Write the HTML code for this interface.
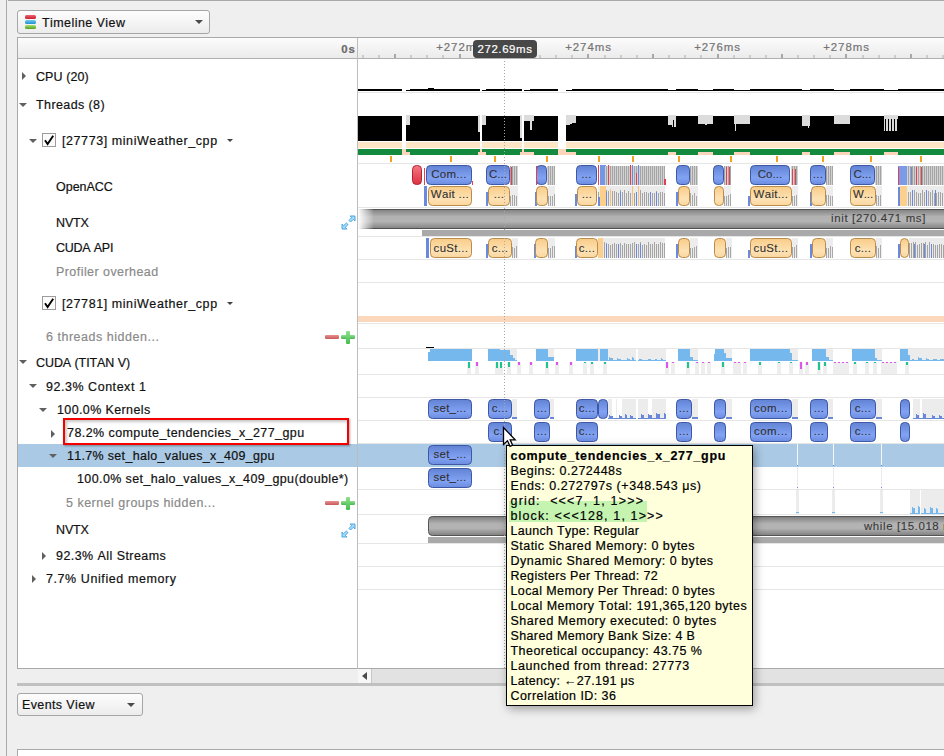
<!DOCTYPE html>
<html><head><meta charset="utf-8"><style>
html,body{margin:0;padding:0;}
body{width:944px;height:756px;overflow:hidden;position:relative;background:#efefef;font-family:"Liberation Sans", sans-serif;}
.t{position:absolute;white-space:pre;line-height:1;font-kerning:none;-webkit-text-stroke:0.2px currentColor;}
.r{position:absolute;box-sizing:border-box;}
</style></head><body>

<div class="r" style="left:6px;top:0px;width:1px;height:756px;background:#a9a9a9;"></div>
<div class="r" style="left:8px;top:0px;width:936px;height:1px;background:#a9a9a9;"></div>
<div class="r" style="left:17px;top:10px;width:193px;height:24px;background:linear-gradient(#fdfdfd,#ececec);border:1px solid #a6a6a6;border-radius:3px;"></div>
<div class="r" style="left:25px;top:15px;width:11px;height:4px;background:linear-gradient(#f06070,#c8202c);border-radius:1.5px;"></div>
<div class="r" style="left:25px;top:20px;width:11px;height:4px;background:linear-gradient(#70c8f0,#2090d0);border-radius:1.5px;"></div>
<div class="r" style="left:25px;top:25px;width:11px;height:4px;background:linear-gradient(#a8e070,#50a020);border-radius:1.5px;"></div>
<div class="t" style="left:42.00px;top:17.20px;font-size:12.48px;color:#111;font-weight:normal;letter-spacing:0.440px;">Timeline View</div>
<div class="r" style="left:194.5px;top:19.5px;width:0;height:0;border-left:4.0px solid transparent;border-right:4.0px solid transparent;border-top:4px solid #4a4a4a;"></div>
<div class="r" style="left:17px;top:37px;width:927px;height:632px;background:#ffffff;border:1px solid #a9a9a9;border-right:none;"></div>
<div class="r" style="left:18px;top:38px;width:926px;height:20px;background:linear-gradient(#fcfcfc,#ebebeb);"></div>
<div class="r" style="left:18px;top:58px;width:926px;height:1px;background:#b0b0b0;"></div>
<div class="r" style="left:357px;top:38px;width:1px;height:631px;background:#bdbdbd;"></div>
<div class="r" style="left:18px;top:669px;width:340px;height:14px;background:#efefef;"></div>
<div class="r" style="left:358px;top:669px;width:13px;height:14px;background:#f7f7f7;"></div>
<div class="r" style="left:362px;top:672px;width:0;height:0;border-top:4px solid transparent;border-bottom:4px solid transparent;border-right:5px solid #4a4a4a;"></div>
<div class="r" style="left:371px;top:669px;width:1px;height:14px;background:#c8c8c8;"></div>
<div class="r" style="left:372px;top:669px;width:572px;height:14px;background:#e2e2e2;"></div>
<div class="r" style="left:17px;top:683px;width:927px;height:3px;background:#c0c0c0;"></div>
<div class="r" style="left:17px;top:693px;width:126px;height:23px;background:linear-gradient(#fdfdfd,#ececec);border:1px solid #a6a6a6;border-radius:3px;"></div>
<div class="t" style="left:22.00px;top:699.20px;font-size:12.48px;color:#111;font-weight:normal;letter-spacing:0.392px;">Events View</div>
<div class="r" style="left:127.0px;top:703px;width:0;height:0;border-left:4.0px solid transparent;border-right:4.0px solid transparent;border-top:4px solid #4a4a4a;"></div>
<div class="r" style="left:17px;top:749px;width:927px;height:7px;background:#ffffff;border-top:1px solid #a9a9a9;border-left:1px solid #a9a9a9;"></div>
<div class="t" style="left:341.30px;top:44.02px;font-size:11.44px;color:#6a6a6a;font-weight:bold;letter-spacing:0.734px;">0s</div>
<div class="t" style="left:36.00px;top:71.20px;font-size:12.48px;color:#111;font-weight:normal;letter-spacing:0.111px;">CPU (20)</div>
<div class="r" style="left:21.5px;top:72.0px;width:0;height:0;border-top:4.0px solid transparent;border-bottom:4.0px solid transparent;border-left:4px solid #606060;"></div>
<div class="t" style="left:36.00px;top:99.20px;font-size:12.48px;color:#111;font-weight:normal;letter-spacing:0.416px;">Threads (8)</div>
<div class="r" style="left:19.0px;top:103px;width:0;height:0;border-left:4.0px solid transparent;border-right:4.0px solid transparent;border-top:4px solid #606060;"></div>
<div class="r" style="left:29.0px;top:139px;width:0;height:0;border-left:4.0px solid transparent;border-right:4.0px solid transparent;border-top:4px solid #606060;"></div>
<div class="r" style="left:42px;top:133px;width:14px;height:14px;background:#fbfbfb;border:1px solid #9c9c9c;"></div>
<svg class="r" style="left:42px;top:133px" width="14" height="14"><path d="M3 7.2 L5.6 11 L11.2 2.8" fill="none" stroke="#000" stroke-width="1.9"/></svg>
<div class="t" style="left:62.00px;top:135.20px;font-size:12.48px;color:#111;font-weight:normal;letter-spacing:0.590px;">[27773] miniWeather_cpp</div>
<div class="r" style="left:226.5px;top:139px;width:0;height:0;border-left:3.0px solid transparent;border-right:3.0px solid transparent;border-top:3px solid #404040;"></div>
<div class="t" style="left:56.00px;top:181.20px;font-size:12.48px;color:#111;font-weight:normal;letter-spacing:-0.002px;">OpenACC</div>
<div class="t" style="left:56.00px;top:217.20px;font-size:12.48px;color:#111;font-weight:normal;letter-spacing:-0.129px;">NVTX</div>
<svg class="r" style="left:341px;top:215px" width="15" height="15" viewBox="0 0 15 15">
<g fill="#a6dcfa" stroke="#4aa6e4" stroke-width="1">
<path d="M9 1 L14 1 L14 6 L12.3 4.3 L9.6 7 L8 5.4 L10.7 2.7 Z"/>
<path d="M1 14 L1 9 L2.7 10.7 L5.4 8 L7 9.6 L4.3 12.3 L6 14 Z"/>
</g></svg>
<div class="t" style="left:56.00px;top:242.20px;font-size:12.48px;color:#111;font-weight:normal;letter-spacing:-0.213px;">CUDA API</div>
<div class="t" style="left:56.00px;top:266.20px;font-size:12.48px;color:#8a8a8a;font-weight:normal;letter-spacing:0.449px;">Profiler overhead</div>
<div class="r" style="left:42px;top:296px;width:14px;height:14px;background:#fbfbfb;border:1px solid #9c9c9c;"></div>
<svg class="r" style="left:42px;top:296px" width="14" height="14"><path d="M3 7.2 L5.6 11 L11.2 2.8" fill="none" stroke="#000" stroke-width="1.9"/></svg>
<div class="t" style="left:62.00px;top:297.70px;font-size:12.48px;color:#111;font-weight:normal;letter-spacing:0.590px;">[27781] miniWeather_cpp</div>
<div class="r" style="left:226.5px;top:302px;width:0;height:0;border-left:3.0px solid transparent;border-right:3.0px solid transparent;border-top:3px solid #404040;"></div>
<div class="t" style="left:46.00px;top:330.70px;font-size:12.48px;color:#8a8a8a;font-weight:normal;letter-spacing:0.535px;">6 threads hidden...</div>
<div class="r" style="left:325px;top:335px;width:14px;height:4px;background:linear-gradient(#e89090,#c85858);border-radius:1px;"></div>
<div class="r" style="left:341px;top:335px;width:14px;height:4px;background:linear-gradient(#90e090,#48b850);border-radius:1px;"></div>
<div class="r" style="left:346px;top:330.5px;width:4px;height:13.5px;background:linear-gradient(#90e090,#40c048);border-radius:1px;"></div>
<div class="t" style="left:36.00px;top:356.70px;font-size:12.48px;color:#111;font-weight:normal;letter-spacing:-0.060px;">CUDA (TITAN V)</div>
<div class="r" style="left:19.0px;top:360px;width:0;height:0;border-left:4.0px solid transparent;border-right:4.0px solid transparent;border-top:4px solid #606060;"></div>
<div class="t" style="left:46.00px;top:381.20px;font-size:12.48px;color:#111;font-weight:normal;letter-spacing:0.547px;">92.3% Context 1</div>
<div class="r" style="left:29.0px;top:384px;width:0;height:0;border-left:4.0px solid transparent;border-right:4.0px solid transparent;border-top:4px solid #606060;"></div>
<div class="t" style="left:57.00px;top:403.70px;font-size:12.48px;color:#111;font-weight:normal;letter-spacing:0.393px;">100.0% Kernels</div>
<div class="r" style="left:39.0px;top:408px;width:0;height:0;border-left:4.0px solid transparent;border-right:4.0px solid transparent;border-top:4px solid #606060;"></div>
<div class="t" style="left:67.00px;top:426.70px;font-size:12.48px;color:#111;font-weight:normal;letter-spacing:0.443px;">78.2% compute_tendencies_x_277_gpu</div>
<div class="r" style="left:51px;top:429.5px;width:0;height:0;border-top:4.0px solid transparent;border-bottom:4.0px solid transparent;border-left:4px solid #606060;"></div>
<div class="r" style="left:18px;top:444px;width:339px;height:23px;background:#aac9e4;"></div>
<div class="t" style="left:67.00px;top:450.20px;font-size:12.48px;color:#111;font-weight:normal;letter-spacing:0.329px;">11.7% set_halo_values_x_409_gpu</div>
<div class="r" style="left:49.0px;top:454px;width:0;height:0;border-left:4.0px solid transparent;border-right:4.0px solid transparent;border-top:4px solid #606060;"></div>
<div class="t" style="left:77.00px;top:473.20px;font-size:12.48px;color:#111;font-weight:normal;letter-spacing:0.404px;">100.0% set_halo_values_x_409_gpu(double*)</div>
<div class="t" style="left:66.00px;top:497.20px;font-size:12.48px;color:#8a8a8a;font-weight:normal;letter-spacing:0.500px;">5 kernel groups hidden...</div>
<div class="r" style="left:325px;top:501px;width:14px;height:4px;background:linear-gradient(#e89090,#c85858);border-radius:1px;"></div>
<div class="r" style="left:341px;top:501px;width:14px;height:4px;background:linear-gradient(#90e090,#48b850);border-radius:1px;"></div>
<div class="r" style="left:346px;top:496.5px;width:4px;height:13.5px;background:linear-gradient(#90e090,#40c048);border-radius:1px;"></div>
<div class="t" style="left:56.00px;top:524.20px;font-size:12.48px;color:#111;font-weight:normal;letter-spacing:-0.129px;">NVTX</div>
<svg class="r" style="left:341px;top:523px" width="15" height="15" viewBox="0 0 15 15">
<g fill="#a6dcfa" stroke="#4aa6e4" stroke-width="1">
<path d="M9 1 L14 1 L14 6 L12.3 4.3 L9.6 7 L8 5.4 L10.7 2.7 Z"/>
<path d="M1 14 L1 9 L2.7 10.7 L5.4 8 L7 9.6 L4.3 12.3 L6 14 Z"/>
</g></svg>
<div class="t" style="left:56.00px;top:549.70px;font-size:12.48px;color:#111;font-weight:normal;letter-spacing:0.454px;">92.3% All Streams</div>
<div class="r" style="left:42px;top:551.5px;width:0;height:0;border-top:4.0px solid transparent;border-bottom:4.0px solid transparent;border-left:4px solid #606060;"></div>
<div class="t" style="left:46.00px;top:572.70px;font-size:12.48px;color:#111;font-weight:normal;letter-spacing:0.597px;">7.7% Unified memory</div>
<div class="r" style="left:32px;top:574.5px;width:0;height:0;border-top:4.0px solid transparent;border-bottom:4.0px solid transparent;border-left:4px solid #606060;"></div>
<div class="r" style="left:63px;top:418px;width:286px;height:27px;background:transparent;border:2px solid #f40000;box-shadow:1px 1px 2px rgba(0,0,0,0.35), inset 2px 2px 3px rgba(0,0,0,0.22);"></div>
<div class="r" style="left:362px;top:55px;width:2px;height:3px;background:#cdcdcd;"></div>
<div class="r" style="left:378px;top:55px;width:2px;height:3px;background:#cdcdcd;"></div>
<div class="r" style="left:394px;top:54px;width:2px;height:4px;background:#a8a8a8;"></div>
<div class="r" style="left:410px;top:55px;width:2px;height:3px;background:#cdcdcd;"></div>
<div class="r" style="left:426px;top:55px;width:2px;height:3px;background:#cdcdcd;"></div>
<div class="r" style="left:442px;top:55px;width:2px;height:3px;background:#cdcdcd;"></div>
<div class="r" style="left:459px;top:54px;width:2px;height:4px;background:#a8a8a8;"></div>
<div class="r" style="left:475px;top:55px;width:2px;height:3px;background:#cdcdcd;"></div>
<div class="r" style="left:491px;top:55px;width:2px;height:3px;background:#cdcdcd;"></div>
<div class="r" style="left:507px;top:55px;width:2px;height:3px;background:#cdcdcd;"></div>
<div class="r" style="left:523px;top:54px;width:2px;height:4px;background:#a8a8a8;"></div>
<div class="r" style="left:539px;top:55px;width:2px;height:3px;background:#cdcdcd;"></div>
<div class="r" style="left:555px;top:55px;width:2px;height:3px;background:#cdcdcd;"></div>
<div class="r" style="left:571px;top:55px;width:2px;height:3px;background:#cdcdcd;"></div>
<div class="r" style="left:587px;top:54px;width:2px;height:4px;background:#a8a8a8;"></div>
<div class="r" style="left:604px;top:55px;width:2px;height:3px;background:#cdcdcd;"></div>
<div class="r" style="left:620px;top:55px;width:2px;height:3px;background:#cdcdcd;"></div>
<div class="r" style="left:636px;top:55px;width:2px;height:3px;background:#cdcdcd;"></div>
<div class="r" style="left:652px;top:54px;width:2px;height:4px;background:#a8a8a8;"></div>
<div class="r" style="left:668px;top:55px;width:2px;height:3px;background:#cdcdcd;"></div>
<div class="r" style="left:684px;top:55px;width:2px;height:3px;background:#cdcdcd;"></div>
<div class="r" style="left:700px;top:55px;width:2px;height:3px;background:#cdcdcd;"></div>
<div class="r" style="left:717px;top:54px;width:2px;height:4px;background:#a8a8a8;"></div>
<div class="r" style="left:733px;top:55px;width:2px;height:3px;background:#cdcdcd;"></div>
<div class="r" style="left:749px;top:55px;width:2px;height:3px;background:#cdcdcd;"></div>
<div class="r" style="left:765px;top:55px;width:2px;height:3px;background:#cdcdcd;"></div>
<div class="r" style="left:781px;top:54px;width:2px;height:4px;background:#a8a8a8;"></div>
<div class="r" style="left:797px;top:55px;width:2px;height:3px;background:#cdcdcd;"></div>
<div class="r" style="left:813px;top:55px;width:2px;height:3px;background:#cdcdcd;"></div>
<div class="r" style="left:829px;top:55px;width:2px;height:3px;background:#cdcdcd;"></div>
<div class="r" style="left:845px;top:54px;width:2px;height:4px;background:#a8a8a8;"></div>
<div class="r" style="left:862px;top:55px;width:2px;height:3px;background:#cdcdcd;"></div>
<div class="r" style="left:878px;top:55px;width:2px;height:3px;background:#cdcdcd;"></div>
<div class="r" style="left:894px;top:55px;width:2px;height:3px;background:#cdcdcd;"></div>
<div class="r" style="left:910px;top:54px;width:2px;height:4px;background:#a8a8a8;"></div>
<div class="r" style="left:926px;top:55px;width:2px;height:3px;background:#cdcdcd;"></div>
<div class="r" style="left:942px;top:55px;width:2px;height:3px;background:#cdcdcd;"></div>
<div class="t" style="left:436.16px;top:42.02px;font-size:11.44px;color:#747474;font-weight:normal;letter-spacing:0.943px;">+272ms</div>
<div class="t" style="left:565.16px;top:42.02px;font-size:11.44px;color:#747474;font-weight:normal;letter-spacing:0.943px;">+274ms</div>
<div class="t" style="left:694.16px;top:42.02px;font-size:11.44px;color:#747474;font-weight:normal;letter-spacing:0.943px;">+276ms</div>
<div class="t" style="left:823.16px;top:42.02px;font-size:11.44px;color:#747474;font-weight:normal;letter-spacing:0.943px;">+278ms</div>
<svg class="r" style="left:358px;top:59px" width="586" height="609" viewBox="358 59 586 609" shape-rendering="crispEdges">
<defs>
<linearGradient id="gb" x1="0" y1="0" x2="0" y2="1"><stop offset="0" stop-color="#6282d4"/><stop offset="0.65" stop-color="#82a2f4"/><stop offset="1" stop-color="#6c8ce0"/></linearGradient>
<linearGradient id="go" x1="0" y1="0" x2="0" y2="1"><stop offset="0" stop-color="#f9cc88"/><stop offset="0.65" stop-color="#fde2b4"/><stop offset="1" stop-color="#fad69e"/></linearGradient>
<linearGradient id="gr" x1="0" y1="0" x2="0" y2="1"><stop offset="0" stop-color="#f57a84"/><stop offset="1" stop-color="#dc3040"/></linearGradient>
<linearGradient id="gn" x1="0" y1="0" x2="0" y2="1"><stop offset="0" stop-color="#545454"/><stop offset="0.05" stop-color="#545454"/><stop offset="0.05" stop-color="#848484"/><stop offset="0.38" stop-color="#b2b2b2"/><stop offset="0.62" stop-color="#b4b4b4"/><stop offset="0.95" stop-color="#868686"/><stop offset="0.95" stop-color="#505050"/><stop offset="1" stop-color="#505050"/></linearGradient>
<linearGradient id="gfade" x1="0" y1="0" x2="1" y2="0"><stop offset="0" stop-color="#fff" stop-opacity="1"/><stop offset="1" stop-color="#fff" stop-opacity="0"/></linearGradient>
<pattern id="pst" x="0" y="0" width="2" height="4" patternUnits="userSpaceOnUse"><rect x="0" y="0" width="2" height="4" fill="#d2d2d2"/><rect x="0" y="0" width="1" height="4" fill="#a4a4a4"/></pattern>
</defs>
<rect x="358" y="59" width="586" height="609" fill="#ffffff" />
<rect x="358" y="444" width="586" height="23" fill="#aac9e4" />
<rect x="358" y="92" width="586" height="1" fill="#e6e6e6" />
<rect x="358" y="163" width="586" height="1" fill="#e6e6e6" />
<rect x="358" y="207" width="586" height="1" fill="#e6e6e6" />
<rect x="358" y="236" width="586" height="1" fill="#e6e6e6" />
<rect x="358" y="259" width="586" height="1" fill="#e6e6e6" />
<rect x="358" y="282" width="586" height="1" fill="#e6e6e6" />
<rect x="358" y="323" width="586" height="1" fill="#e6e6e6" />
<rect x="358" y="348" width="586" height="1" fill="#e6e6e6" />
<rect x="358" y="374" width="586" height="1" fill="#e6e6e6" />
<rect x="358" y="397" width="586" height="1" fill="#e6e6e6" />
<rect x="358" y="420" width="586" height="1" fill="#e6e6e6" />
<rect x="358" y="443" width="586" height="1" fill="#e6e6e6" />
<rect x="358" y="489" width="586" height="1" fill="#e6e6e6" />
<rect x="358" y="514" width="586" height="1" fill="#e6e6e6" />
<rect x="358" y="543" width="586" height="1" fill="#e6e6e6" />
<rect x="358" y="566" width="586" height="1" fill="#e6e6e6" />
<rect x="358" y="589" width="586" height="1" fill="#e6e6e6" />
<rect x="358" y="89" width="586" height="2" fill="#000" />
<rect x="402" y="88" width="4" height="4" fill="#fff" />
<rect x="480" y="88" width="2" height="4" fill="#fff" />
<rect x="522" y="88" width="2" height="4" fill="#fff" />
<rect x="558" y="88" width="8" height="4" fill="#fff" />
<rect x="668" y="89" width="8" height="1" fill="#fff" />
<rect x="698" y="89" width="15" height="1" fill="#fff" />
<rect x="734" y="89" width="16" height="1" fill="#fff" />
<rect x="802" y="89" width="8" height="1" fill="#fff" />
<rect x="834" y="89" width="16" height="1" fill="#fff" />
<rect x="884" y="89" width="14" height="1" fill="#fff" />
<rect x="406" y="89" width="4" height="1" fill="#fff" />
<rect x="428" y="88" width="6" height="1" fill="#000" />
<rect x="482" y="89" width="4" height="1" fill="#fff" />
<rect x="524" y="89" width="6" height="1" fill="#fff" />
<rect x="566" y="89" width="6" height="1" fill="#fff" />
<rect x="358" y="116" width="586" height="25" fill="#000" />
<rect x="358" y="142" width="586" height="6" fill="#fde6c6" />
<rect x="358" y="149" width="586" height="6" fill="#138a3e" />
<rect x="406" y="115" width="1" height="10" fill="#dcdcdc" />
<rect x="407" y="115" width="1" height="10" fill="#dcdcdc" />
<rect x="408" y="115" width="1" height="10" fill="#dcdcdc" />
<rect x="409" y="115" width="1" height="10" fill="#dcdcdc" />
<rect x="478" y="115" width="1" height="17" fill="#dcdcdc" />
<rect x="479" y="115" width="1" height="17" fill="#dcdcdc" />
<rect x="482" y="115" width="1" height="10" fill="#dcdcdc" />
<rect x="483" y="115" width="1" height="10" fill="#dcdcdc" />
<rect x="484" y="115" width="1" height="10" fill="#dcdcdc" />
<rect x="485" y="115" width="1" height="10" fill="#dcdcdc" />
<rect x="520" y="115" width="1" height="23" fill="#dcdcdc" />
<rect x="521" y="115" width="1" height="23" fill="#dcdcdc" />
<rect x="524" y="115" width="1" height="6" fill="#dcdcdc" />
<rect x="525" y="115" width="1" height="6" fill="#dcdcdc" />
<rect x="526" y="115" width="1" height="6" fill="#dcdcdc" />
<rect x="527" y="115" width="1" height="6" fill="#dcdcdc" />
<rect x="528" y="115" width="1" height="6" fill="#dcdcdc" />
<rect x="529" y="115" width="1" height="6" fill="#dcdcdc" />
<rect x="530" y="115" width="1" height="15" fill="#dcdcdc" />
<rect x="531" y="115" width="1" height="15" fill="#dcdcdc" />
<rect x="532" y="115" width="1" height="6" fill="#dcdcdc" />
<rect x="533" y="115" width="1" height="6" fill="#dcdcdc" />
<rect x="566" y="115" width="1" height="10" fill="#dcdcdc" />
<rect x="567" y="115" width="1" height="10" fill="#dcdcdc" />
<rect x="568" y="115" width="1" height="10" fill="#dcdcdc" />
<rect x="569" y="115" width="1" height="10" fill="#dcdcdc" />
<rect x="570" y="115" width="1" height="9" fill="#dcdcdc" />
<rect x="571" y="115" width="1" height="9" fill="#dcdcdc" />
<rect x="572" y="115" width="1" height="8" fill="#dcdcdc" />
<rect x="573" y="115" width="1" height="8" fill="#dcdcdc" />
<rect x="574" y="115" width="1" height="8" fill="#dcdcdc" />
<rect x="575" y="115" width="1" height="8" fill="#dcdcdc" />
<rect x="668" y="115" width="1" height="10" fill="#dcdcdc" />
<rect x="669" y="115" width="1" height="10" fill="#dcdcdc" />
<rect x="670" y="115" width="1" height="10" fill="#dcdcdc" />
<rect x="671" y="115" width="1" height="10" fill="#dcdcdc" />
<rect x="672" y="115" width="1" height="12" fill="#dcdcdc" />
<rect x="673" y="115" width="1" height="5" fill="#dcdcdc" />
<rect x="674" y="115" width="1" height="12" fill="#dcdcdc" />
<rect x="675" y="115" width="1" height="12" fill="#dcdcdc" />
<rect x="698" y="115" width="1" height="9" fill="#dcdcdc" />
<rect x="699" y="115" width="1" height="9" fill="#dcdcdc" />
<rect x="700" y="115" width="1" height="9" fill="#dcdcdc" />
<rect x="701" y="115" width="1" height="9" fill="#dcdcdc" />
<rect x="702" y="115" width="1" height="9" fill="#dcdcdc" />
<rect x="703" y="115" width="1" height="9" fill="#dcdcdc" />
<rect x="704" y="115" width="1" height="9" fill="#dcdcdc" />
<rect x="705" y="115" width="1" height="10" fill="#dcdcdc" />
<rect x="706" y="115" width="1" height="10" fill="#dcdcdc" />
<rect x="707" y="115" width="1" height="9" fill="#dcdcdc" />
<rect x="708" y="115" width="1" height="9" fill="#dcdcdc" />
<rect x="709" y="115" width="1" height="9" fill="#dcdcdc" />
<rect x="710" y="115" width="1" height="9" fill="#dcdcdc" />
<rect x="711" y="115" width="1" height="9" fill="#dcdcdc" />
<rect x="712" y="115" width="1" height="9" fill="#dcdcdc" />
<rect x="734" y="115" width="1" height="9" fill="#dcdcdc" />
<rect x="735" y="115" width="1" height="16" fill="#dcdcdc" />
<rect x="736" y="115" width="1" height="9" fill="#dcdcdc" />
<rect x="737" y="115" width="1" height="9" fill="#dcdcdc" />
<rect x="738" y="115" width="1" height="9" fill="#dcdcdc" />
<rect x="739" y="115" width="1" height="9" fill="#dcdcdc" />
<rect x="740" y="115" width="1" height="9" fill="#dcdcdc" />
<rect x="741" y="115" width="1" height="9" fill="#dcdcdc" />
<rect x="742" y="115" width="1" height="9" fill="#dcdcdc" />
<rect x="743" y="115" width="1" height="9" fill="#dcdcdc" />
<rect x="744" y="115" width="1" height="9" fill="#dcdcdc" />
<rect x="745" y="115" width="1" height="9" fill="#dcdcdc" />
<rect x="746" y="115" width="1" height="9" fill="#dcdcdc" />
<rect x="747" y="115" width="1" height="9" fill="#dcdcdc" />
<rect x="748" y="115" width="1" height="9" fill="#dcdcdc" />
<rect x="749" y="115" width="1" height="9" fill="#dcdcdc" />
<rect x="802" y="115" width="1" height="11" fill="#dcdcdc" />
<rect x="803" y="115" width="1" height="11" fill="#dcdcdc" />
<rect x="804" y="115" width="1" height="11" fill="#dcdcdc" />
<rect x="805" y="115" width="1" height="11" fill="#dcdcdc" />
<rect x="806" y="115" width="1" height="11" fill="#dcdcdc" />
<rect x="807" y="115" width="1" height="11" fill="#dcdcdc" />
<rect x="808" y="115" width="1" height="13" fill="#dcdcdc" />
<rect x="809" y="115" width="1" height="11" fill="#dcdcdc" />
<rect x="834" y="115" width="1" height="9" fill="#dcdcdc" />
<rect x="835" y="115" width="1" height="9" fill="#dcdcdc" />
<rect x="836" y="115" width="1" height="9" fill="#dcdcdc" />
<rect x="837" y="115" width="1" height="9" fill="#dcdcdc" />
<rect x="838" y="115" width="1" height="9" fill="#dcdcdc" />
<rect x="839" y="115" width="1" height="9" fill="#dcdcdc" />
<rect x="840" y="115" width="1" height="9" fill="#dcdcdc" />
<rect x="841" y="115" width="1" height="9" fill="#dcdcdc" />
<rect x="842" y="115" width="1" height="9" fill="#dcdcdc" />
<rect x="843" y="115" width="1" height="9" fill="#dcdcdc" />
<rect x="844" y="115" width="1" height="9" fill="#dcdcdc" />
<rect x="845" y="115" width="1" height="9" fill="#dcdcdc" />
<rect x="846" y="115" width="1" height="9" fill="#dcdcdc" />
<rect x="847" y="115" width="1" height="9" fill="#dcdcdc" />
<rect x="848" y="115" width="1" height="9" fill="#dcdcdc" />
<rect x="849" y="115" width="1" height="9" fill="#dcdcdc" />
<rect x="884" y="115" width="1" height="16" fill="#dcdcdc" />
<rect x="885" y="115" width="1" height="4" fill="#dcdcdc" />
<rect x="886" y="115" width="1" height="16" fill="#dcdcdc" />
<rect x="887" y="115" width="1" height="16" fill="#dcdcdc" />
<rect x="888" y="115" width="1" height="4" fill="#dcdcdc" />
<rect x="889" y="115" width="1" height="16" fill="#dcdcdc" />
<rect x="890" y="115" width="1" height="16" fill="#dcdcdc" />
<rect x="891" y="115" width="1" height="4" fill="#dcdcdc" />
<rect x="892" y="115" width="1" height="16" fill="#dcdcdc" />
<rect x="893" y="115" width="1" height="16" fill="#dcdcdc" />
<rect x="894" y="115" width="1" height="4" fill="#dcdcdc" />
<rect x="895" y="115" width="1" height="16" fill="#dcdcdc" />
<rect x="896" y="115" width="1" height="16" fill="#dcdcdc" />
<rect x="897" y="115" width="1" height="4" fill="#dcdcdc" />
<rect x="406" y="152" width="4" height="3" fill="#fbd6bc" />
<rect x="478" y="152" width="8" height="3" fill="#fbd6bc" />
<rect x="520" y="152" width="14" height="3" fill="#fbd6bc" />
<rect x="566" y="152" width="10" height="3" fill="#fbd6bc" />
<rect x="668" y="152" width="8" height="3" fill="#fbd6bc" />
<rect x="698" y="152" width="15" height="3" fill="#fbd6bc" />
<rect x="734" y="152" width="16" height="3" fill="#fbd6bc" />
<rect x="802" y="152" width="8" height="3" fill="#fbd6bc" />
<rect x="834" y="152" width="16" height="3" fill="#fbd6bc" />
<rect x="884" y="152" width="14" height="3" fill="#fbd6bc" />
<rect x="402" y="116" width="4" height="39" fill="#fff" />
<rect x="402" y="149" width="4" height="6" fill="#fbd6bc" />
<rect x="480" y="116" width="2" height="39" fill="#fff" />
<rect x="480" y="149" width="2" height="6" fill="#fbd6bc" />
<rect x="522" y="116" width="2" height="39" fill="#fff" />
<rect x="522" y="149" width="2" height="6" fill="#fbd6bc" />
<rect x="558" y="116" width="8" height="39" fill="#fff" />
<rect x="558" y="149" width="8" height="6" fill="#fbd6bc" />
<rect x="390" y="156" width="2" height="6" fill="#f0a21c" />
<rect x="450" y="156" width="2" height="6" fill="#f0a21c" />
<rect x="494" y="156" width="2" height="6" fill="#f0a21c" />
<rect x="546" y="156" width="2" height="6" fill="#f0a21c" />
<rect x="598" y="156" width="2" height="6" fill="#f0a21c" />
<rect x="632" y="156" width="2" height="6" fill="#f0a21c" />
<rect x="678" y="156" width="2" height="6" fill="#f0a21c" />
<rect x="730" y="156" width="2" height="6" fill="#f0a21c" />
<rect x="776" y="156" width="2" height="6" fill="#f0a21c" />
<rect x="822" y="156" width="2" height="6" fill="#f0a21c" />
<rect x="870" y="156" width="2" height="6" fill="#f0a21c" />
<rect x="920" y="156" width="2" height="6" fill="#f0a21c" />
<rect x="412.5" y="165.5" width="9" height="19" rx="4" ry="4" fill="url(#gr)" stroke="#b42232" stroke-width="1" shape-rendering="geometricPrecision"/>
<rect x="424" y="168" width="1" height="17" fill="#e04050" />
<rect x="426.5" y="165.5" width="45" height="19" rx="4" ry="4" fill="url(#gb)" stroke="#3e58a6" stroke-width="1" shape-rendering="geometricPrecision"/>
<rect x="472" y="181" width="1" height="4" fill="#e04050" />
<rect x="486.5" y="165.5" width="23" height="19" rx="4" ry="4" fill="url(#gb)" stroke="#3e58a6" stroke-width="1" shape-rendering="geometricPrecision"/>
<rect x="510" y="166" width="8" height="19" fill="url(#pst)" />
<rect x="511" y="167" width="1" height="18" fill="#e04050" />
<rect x="536.5" y="165.5" width="10" height="19" rx="4" ry="4" fill="url(#gb)" stroke="#3e58a6" stroke-width="1" shape-rendering="geometricPrecision"/>
<rect x="547" y="166" width="8" height="19" fill="url(#pst)" />
<rect x="536" y="166" width="1" height="19" fill="#e04050" />
<rect x="576.5" y="165.5" width="20" height="19" rx="4" ry="4" fill="url(#gb)" stroke="#3e58a6" stroke-width="1" shape-rendering="geometricPrecision"/>
<rect x="600" y="165" width="6" height="20" fill="#7596e4" />
<rect x="598" y="165" width="1" height="20" fill="#e04050" />
<rect x="605" y="166" width="60" height="19" fill="url(#pst)" />
<rect x="608" y="165" width="1" height="20" fill="#e04050" />
<rect x="630" y="165" width="1" height="20" fill="#e04050" />
<rect x="636" y="173" width="1" height="12" fill="#e04050" />
<rect x="664" y="179" width="2" height="6" fill="#e04050" />
<rect x="632" y="165" width="1" height="20" fill="#6a8ae0" />
<rect x="638" y="165" width="1" height="20" fill="#6a8ae0" />
<rect x="676.5" y="165.5" width="13" height="19" rx="4" ry="4" fill="url(#gb)" stroke="#3e58a6" stroke-width="1" shape-rendering="geometricPrecision"/>
<rect x="690" y="166" width="8" height="19" fill="url(#pst)" />
<rect x="713.5" y="165.5" width="10" height="19" rx="4" ry="4" fill="url(#gb)" stroke="#3e58a6" stroke-width="1" shape-rendering="geometricPrecision"/>
<rect x="724" y="166" width="7" height="19" fill="url(#pst)" />
<rect x="726" y="167" width="1" height="18" fill="#e04050" />
<rect x="729" y="167" width="1" height="18" fill="#e04050" />
<rect x="750.5" y="165.5" width="39" height="19" rx="4" ry="4" fill="url(#gb)" stroke="#3e58a6" stroke-width="1" shape-rendering="geometricPrecision"/>
<rect x="791" y="166" width="7" height="19" fill="url(#pst)" />
<rect x="792" y="169" width="1" height="16" fill="#e04050" />
<rect x="795" y="169" width="1" height="16" fill="#e04050" />
<rect x="810.5" y="165.5" width="15" height="19" rx="4" ry="4" fill="url(#gb)" stroke="#3e58a6" stroke-width="1" shape-rendering="geometricPrecision"/>
<rect x="826" y="166" width="7" height="19" fill="url(#pst)" />
<rect x="850.5" y="165.5" width="24" height="19" rx="4" ry="4" fill="url(#gb)" stroke="#3e58a6" stroke-width="1" shape-rendering="geometricPrecision"/>
<rect x="875" y="166" width="7" height="19" fill="url(#pst)" />
<rect x="898" y="166" width="9" height="19" fill="#7b9be8" />
<rect x="907" y="166" width="37" height="19" fill="url(#pst)" />
<rect x="898" y="167" width="1" height="18" fill="#e04050" />
<rect x="916" y="167" width="1" height="18" fill="#e04050" />
<rect x="921" y="167" width="1" height="18" fill="#e04050" />
<rect x="911" y="167" width="1" height="18" fill="#6a8ae0" />
<rect x="424" y="186" width="3" height="20" fill="#6a8ae0" />
<rect x="428.5" y="186.5" width="43" height="19" rx="4" ry="4" fill="url(#go)" stroke="#b88c4c" stroke-width="1" shape-rendering="geometricPrecision"/>
<rect x="486" y="192" width="2" height="14" fill="#6a8ae0" />
<rect x="488.5" y="186.5" width="21" height="19" rx="4" ry="4" fill="url(#go)" stroke="#b88c4c" stroke-width="1" shape-rendering="geometricPrecision"/>
<rect x="510" y="186" width="8" height="20" fill="#ededed" />
<rect x="510" y="196" width="1" height="10" fill="#a8a8a8" />
<rect x="512" y="195" width="1" height="11" fill="#a8a8a8" />
<rect x="514" y="195" width="1" height="11" fill="#a8a8a8" />
<rect x="516" y="196" width="1" height="10" fill="#a8a8a8" />
<rect x="535" y="192" width="2" height="14" fill="#6a8ae0" />
<rect x="536.5" y="186.5" width="11" height="19" rx="4" ry="4" fill="url(#go)" stroke="#b88c4c" stroke-width="1" shape-rendering="geometricPrecision"/>
<rect x="548" y="186" width="7" height="20" fill="#ededed" />
<rect x="548" y="196" width="1" height="10" fill="#a8a8a8" />
<rect x="550" y="196" width="1" height="10" fill="#a8a8a8" />
<rect x="552" y="196" width="1" height="10" fill="#a8a8a8" />
<rect x="554" y="194" width="1" height="12" fill="#a8a8a8" />
<rect x="575" y="194" width="2" height="12" fill="#6a8ae0" />
<rect x="577.5" y="186.5" width="19" height="19" rx="4" ry="4" fill="url(#go)" stroke="#b88c4c" stroke-width="1" shape-rendering="geometricPrecision"/>
<rect x="598" y="186" width="67" height="20" fill="#ebebeb" />
<rect x="598" y="192" width="1" height="14" fill="#a4a4a4" />
<rect x="600" y="192" width="1" height="14" fill="#a4a4a4" />
<rect x="602" y="191" width="1" height="15" fill="#a4a4a4" />
<rect x="604" y="192" width="1" height="14" fill="#a4a4a4" />
<rect x="606" y="190" width="1" height="16" fill="#a4a4a4" />
<rect x="608" y="191" width="1" height="15" fill="#a4a4a4" />
<rect x="610" y="190" width="1" height="16" fill="#a4a4a4" />
<rect x="612" y="191" width="1" height="15" fill="#a4a4a4" />
<rect x="614" y="191" width="1" height="15" fill="#a4a4a4" />
<rect x="616" y="192" width="1" height="14" fill="#a4a4a4" />
<rect x="618" y="193" width="1" height="13" fill="#a4a4a4" />
<rect x="620" y="190" width="1" height="16" fill="#a4a4a4" />
<rect x="622" y="192" width="1" height="14" fill="#a4a4a4" />
<rect x="624" y="190" width="1" height="16" fill="#a4a4a4" />
<rect x="626" y="193" width="1" height="13" fill="#a4a4a4" />
<rect x="628" y="191" width="1" height="15" fill="#a4a4a4" />
<rect x="630" y="193" width="1" height="13" fill="#a4a4a4" />
<rect x="632" y="193" width="1" height="13" fill="#a4a4a4" />
<rect x="634" y="193" width="1" height="13" fill="#a4a4a4" />
<rect x="636" y="192" width="1" height="14" fill="#a4a4a4" />
<rect x="638" y="192" width="1" height="14" fill="#a4a4a4" />
<rect x="640" y="190" width="1" height="16" fill="#a4a4a4" />
<rect x="642" y="193" width="1" height="13" fill="#a4a4a4" />
<rect x="644" y="192" width="1" height="14" fill="#a4a4a4" />
<rect x="646" y="192" width="1" height="14" fill="#a4a4a4" />
<rect x="648" y="193" width="1" height="13" fill="#a4a4a4" />
<rect x="650" y="192" width="1" height="14" fill="#a4a4a4" />
<rect x="652" y="193" width="1" height="13" fill="#a4a4a4" />
<rect x="654" y="193" width="1" height="13" fill="#a4a4a4" />
<rect x="656" y="191" width="1" height="15" fill="#a4a4a4" />
<rect x="658" y="193" width="1" height="13" fill="#a4a4a4" />
<rect x="660" y="192" width="1" height="14" fill="#a4a4a4" />
<rect x="662" y="192" width="1" height="14" fill="#a4a4a4" />
<rect x="664" y="193" width="1" height="13" fill="#a4a4a4" />
<rect x="600" y="186" width="6" height="20" fill="#fcd08c" />
<rect x="598" y="197" width="2" height="9" fill="#6a8ae0" />
<rect x="606" y="192" width="1" height="14" fill="#6a8ae0" />
<rect x="620" y="192" width="1" height="14" fill="#6a8ae0" />
<rect x="636" y="192" width="1" height="14" fill="#6a8ae0" />
<rect x="650" y="192" width="1" height="14" fill="#6a8ae0" />
<rect x="656" y="192" width="1" height="14" fill="#6a8ae0" />
<rect x="610" y="189" width="1" height="17" fill="#f8c070" />
<rect x="632" y="186" width="1" height="20" fill="#f8c070" />
<rect x="638" y="186" width="1" height="20" fill="#f8c070" />
<rect x="676" y="192" width="2" height="14" fill="#6a8ae0" />
<rect x="678.5" y="186.5" width="11" height="19" rx="4" ry="4" fill="url(#go)" stroke="#b88c4c" stroke-width="1" shape-rendering="geometricPrecision"/>
<rect x="690" y="186" width="8" height="20" fill="#ededed" />
<rect x="690" y="193" width="1" height="13" fill="#a8a8a8" />
<rect x="692" y="195" width="1" height="11" fill="#a8a8a8" />
<rect x="694" y="193" width="1" height="13" fill="#a8a8a8" />
<rect x="696" y="196" width="1" height="10" fill="#a8a8a8" />
<rect x="714.5" y="186.5" width="9" height="19" rx="4" ry="4" fill="url(#go)" stroke="#b88c4c" stroke-width="1" shape-rendering="geometricPrecision"/>
<rect x="724" y="186" width="7" height="20" fill="#ededed" />
<rect x="724" y="196" width="1" height="10" fill="#a8a8a8" />
<rect x="726" y="196" width="1" height="10" fill="#a8a8a8" />
<rect x="728" y="195" width="1" height="11" fill="#a8a8a8" />
<rect x="730" y="194" width="1" height="12" fill="#a8a8a8" />
<rect x="748" y="196" width="2" height="10" fill="#6a8ae0" />
<rect x="750.5" y="186.5" width="41" height="19" rx="4" ry="4" fill="url(#go)" stroke="#b88c4c" stroke-width="1" shape-rendering="geometricPrecision"/>
<rect x="792" y="186" width="6" height="20" fill="#ededed" />
<rect x="792" y="196" width="1" height="10" fill="#a8a8a8" />
<rect x="794" y="196" width="1" height="10" fill="#a8a8a8" />
<rect x="796" y="195" width="1" height="11" fill="#a8a8a8" />
<rect x="810" y="192" width="2" height="14" fill="#6a8ae0" />
<rect x="811.5" y="186.5" width="14" height="19" rx="4" ry="4" fill="url(#go)" stroke="#b88c4c" stroke-width="1" shape-rendering="geometricPrecision"/>
<rect x="826" y="186" width="7" height="20" fill="#ededed" />
<rect x="826" y="195" width="1" height="11" fill="#a8a8a8" />
<rect x="828" y="195" width="1" height="11" fill="#a8a8a8" />
<rect x="830" y="196" width="1" height="10" fill="#a8a8a8" />
<rect x="832" y="196" width="1" height="10" fill="#a8a8a8" />
<rect x="850.5" y="186.5" width="25" height="19" rx="4" ry="4" fill="url(#go)" stroke="#b88c4c" stroke-width="1" shape-rendering="geometricPrecision"/>
<rect x="876" y="186" width="6" height="20" fill="#ededed" />
<rect x="876" y="195" width="1" height="11" fill="#a8a8a8" />
<rect x="878" y="196" width="1" height="10" fill="#a8a8a8" />
<rect x="880" y="195" width="1" height="11" fill="#a8a8a8" />
<rect x="898" y="186" width="46" height="20" fill="#ebebeb" />
<rect x="898" y="192" width="1" height="14" fill="#a4a4a4" />
<rect x="900" y="190" width="1" height="16" fill="#a4a4a4" />
<rect x="902" y="192" width="1" height="14" fill="#a4a4a4" />
<rect x="904" y="190" width="1" height="16" fill="#a4a4a4" />
<rect x="906" y="190" width="1" height="16" fill="#a4a4a4" />
<rect x="908" y="192" width="1" height="14" fill="#a4a4a4" />
<rect x="910" y="192" width="1" height="14" fill="#a4a4a4" />
<rect x="912" y="192" width="1" height="14" fill="#a4a4a4" />
<rect x="914" y="190" width="1" height="16" fill="#a4a4a4" />
<rect x="916" y="192" width="1" height="14" fill="#a4a4a4" />
<rect x="918" y="193" width="1" height="13" fill="#a4a4a4" />
<rect x="920" y="193" width="1" height="13" fill="#a4a4a4" />
<rect x="922" y="190" width="1" height="16" fill="#a4a4a4" />
<rect x="924" y="192" width="1" height="14" fill="#a4a4a4" />
<rect x="926" y="192" width="1" height="14" fill="#a4a4a4" />
<rect x="928" y="191" width="1" height="15" fill="#a4a4a4" />
<rect x="930" y="192" width="1" height="14" fill="#a4a4a4" />
<rect x="932" y="190" width="1" height="16" fill="#a4a4a4" />
<rect x="934" y="193" width="1" height="13" fill="#a4a4a4" />
<rect x="936" y="193" width="1" height="13" fill="#a4a4a4" />
<rect x="938" y="192" width="1" height="14" fill="#a4a4a4" />
<rect x="940" y="192" width="1" height="14" fill="#a4a4a4" />
<rect x="942" y="193" width="1" height="13" fill="#a4a4a4" />
<rect x="898" y="187" width="2" height="19" fill="#6a8ae0" />
<rect x="900" y="186" width="7" height="20" fill="#fcd08c" />
<rect x="912" y="190" width="1" height="16" fill="#6a8ae0" />
<rect x="926" y="190" width="1" height="16" fill="#6a8ae0" />
<rect x="935" y="190" width="1" height="16" fill="#6a8ae0" />
<rect x="358" y="209" width="586" height="20" fill="url(#gn)" />
<rect x="358" y="209" width="16" height="20" fill="url(#gfade)" />
<rect x="422" y="230" width="522" height="6" fill="#a9a9a9" />
<rect x="426" y="238" width="3" height="20" fill="#6a8ae0" />
<rect x="430.5" y="238.5" width="41" height="19" rx="4" ry="4" fill="url(#go)" stroke="#b88c4c" stroke-width="1" shape-rendering="geometricPrecision"/>
<rect x="486" y="244" width="2" height="14" fill="#6a8ae0" />
<rect x="488.5" y="238.5" width="23" height="19" rx="4" ry="4" fill="url(#go)" stroke="#b88c4c" stroke-width="1" shape-rendering="geometricPrecision"/>
<rect x="512" y="238" width="6" height="20" fill="#ededed" />
<rect x="512" y="247" width="1" height="11" fill="#a8a8a8" />
<rect x="514" y="248" width="1" height="10" fill="#a8a8a8" />
<rect x="516" y="246" width="1" height="12" fill="#a8a8a8" />
<rect x="534" y="244" width="2" height="14" fill="#6a8ae0" />
<rect x="535.5" y="238.5" width="12" height="19" rx="4" ry="4" fill="url(#go)" stroke="#b88c4c" stroke-width="1" shape-rendering="geometricPrecision"/>
<rect x="548" y="238" width="7" height="20" fill="#ededed" />
<rect x="548" y="248" width="1" height="10" fill="#a8a8a8" />
<rect x="550" y="248" width="1" height="10" fill="#a8a8a8" />
<rect x="552" y="246" width="1" height="12" fill="#a8a8a8" />
<rect x="554" y="246" width="1" height="12" fill="#a8a8a8" />
<rect x="575" y="246" width="2" height="12" fill="#6a8ae0" />
<rect x="576.5" y="238.5" width="21" height="19" rx="4" ry="4" fill="url(#go)" stroke="#b88c4c" stroke-width="1" shape-rendering="geometricPrecision"/>
<rect x="598" y="238" width="67" height="20" fill="#ebebeb" />
<rect x="598" y="245" width="1" height="13" fill="#a4a4a4" />
<rect x="600" y="244" width="1" height="14" fill="#a4a4a4" />
<rect x="602" y="243" width="1" height="15" fill="#a4a4a4" />
<rect x="604" y="242" width="1" height="16" fill="#a4a4a4" />
<rect x="606" y="243" width="1" height="15" fill="#a4a4a4" />
<rect x="608" y="244" width="1" height="14" fill="#a4a4a4" />
<rect x="610" y="245" width="1" height="13" fill="#a4a4a4" />
<rect x="612" y="244" width="1" height="14" fill="#a4a4a4" />
<rect x="614" y="243" width="1" height="15" fill="#a4a4a4" />
<rect x="616" y="244" width="1" height="14" fill="#a4a4a4" />
<rect x="618" y="244" width="1" height="14" fill="#a4a4a4" />
<rect x="620" y="243" width="1" height="15" fill="#a4a4a4" />
<rect x="622" y="245" width="1" height="13" fill="#a4a4a4" />
<rect x="624" y="243" width="1" height="15" fill="#a4a4a4" />
<rect x="626" y="244" width="1" height="14" fill="#a4a4a4" />
<rect x="628" y="244" width="1" height="14" fill="#a4a4a4" />
<rect x="630" y="244" width="1" height="14" fill="#a4a4a4" />
<rect x="632" y="243" width="1" height="15" fill="#a4a4a4" />
<rect x="634" y="242" width="1" height="16" fill="#a4a4a4" />
<rect x="636" y="244" width="1" height="14" fill="#a4a4a4" />
<rect x="638" y="244" width="1" height="14" fill="#a4a4a4" />
<rect x="640" y="242" width="1" height="16" fill="#a4a4a4" />
<rect x="642" y="245" width="1" height="13" fill="#a4a4a4" />
<rect x="644" y="244" width="1" height="14" fill="#a4a4a4" />
<rect x="646" y="245" width="1" height="13" fill="#a4a4a4" />
<rect x="648" y="242" width="1" height="16" fill="#a4a4a4" />
<rect x="650" y="244" width="1" height="14" fill="#a4a4a4" />
<rect x="652" y="244" width="1" height="14" fill="#a4a4a4" />
<rect x="654" y="242" width="1" height="16" fill="#a4a4a4" />
<rect x="656" y="244" width="1" height="14" fill="#a4a4a4" />
<rect x="658" y="244" width="1" height="14" fill="#a4a4a4" />
<rect x="660" y="242" width="1" height="16" fill="#a4a4a4" />
<rect x="662" y="243" width="1" height="15" fill="#a4a4a4" />
<rect x="664" y="243" width="1" height="15" fill="#a4a4a4" />
<rect x="598" y="238" width="5" height="20" fill="#fcd08c" />
<rect x="606" y="244" width="1" height="14" fill="#6a8ae0" />
<rect x="618" y="244" width="1" height="14" fill="#6a8ae0" />
<rect x="636" y="244" width="1" height="14" fill="#6a8ae0" />
<rect x="640" y="244" width="1" height="14" fill="#6a8ae0" />
<rect x="676" y="244" width="2" height="14" fill="#6a8ae0" />
<rect x="678.5" y="238.5" width="11" height="19" rx="4" ry="4" fill="url(#go)" stroke="#b88c4c" stroke-width="1" shape-rendering="geometricPrecision"/>
<rect x="690" y="238" width="8" height="20" fill="#ededed" />
<rect x="690" y="248" width="1" height="10" fill="#a8a8a8" />
<rect x="692" y="248" width="1" height="10" fill="#a8a8a8" />
<rect x="694" y="247" width="1" height="11" fill="#a8a8a8" />
<rect x="696" y="246" width="1" height="12" fill="#a8a8a8" />
<rect x="714.5" y="238.5" width="11" height="19" rx="4" ry="4" fill="url(#go)" stroke="#b88c4c" stroke-width="1" shape-rendering="geometricPrecision"/>
<rect x="726" y="238" width="6" height="20" fill="#ededed" />
<rect x="726" y="248" width="1" height="10" fill="#a8a8a8" />
<rect x="728" y="247" width="1" height="11" fill="#a8a8a8" />
<rect x="730" y="247" width="1" height="11" fill="#a8a8a8" />
<rect x="748" y="250" width="2" height="8" fill="#6a8ae0" />
<rect x="750.5" y="238.5" width="41" height="19" rx="4" ry="4" fill="url(#go)" stroke="#b88c4c" stroke-width="1" shape-rendering="geometricPrecision"/>
<rect x="792" y="238" width="6" height="20" fill="#ededed" />
<rect x="792" y="247" width="1" height="11" fill="#a8a8a8" />
<rect x="794" y="247" width="1" height="11" fill="#a8a8a8" />
<rect x="796" y="245" width="1" height="13" fill="#a8a8a8" />
<rect x="810" y="244" width="2" height="14" fill="#6a8ae0" />
<rect x="812.5" y="238.5" width="13" height="19" rx="4" ry="4" fill="url(#go)" stroke="#b88c4c" stroke-width="1" shape-rendering="geometricPrecision"/>
<rect x="826" y="238" width="7" height="20" fill="#ededed" />
<rect x="826" y="248" width="1" height="10" fill="#a8a8a8" />
<rect x="828" y="248" width="1" height="10" fill="#a8a8a8" />
<rect x="830" y="246" width="1" height="12" fill="#a8a8a8" />
<rect x="832" y="247" width="1" height="11" fill="#a8a8a8" />
<rect x="850.5" y="238.5" width="25" height="19" rx="4" ry="4" fill="url(#go)" stroke="#b88c4c" stroke-width="1" shape-rendering="geometricPrecision"/>
<rect x="876" y="238" width="6" height="20" fill="#ededed" />
<rect x="876" y="246" width="1" height="12" fill="#a8a8a8" />
<rect x="878" y="248" width="1" height="10" fill="#a8a8a8" />
<rect x="880" y="245" width="1" height="13" fill="#a8a8a8" />
<rect x="898" y="244" width="2" height="14" fill="#6a8ae0" />
<rect x="900.5" y="238.5" width="8" height="19" rx="4" ry="4" fill="url(#go)" stroke="#b88c4c" stroke-width="1" shape-rendering="geometricPrecision"/>
<rect x="909" y="238" width="35" height="20" fill="#ebebeb" />
<rect x="909" y="243" width="1" height="15" fill="#a4a4a4" />
<rect x="911" y="243" width="1" height="15" fill="#a4a4a4" />
<rect x="913" y="242" width="1" height="16" fill="#a4a4a4" />
<rect x="915" y="242" width="1" height="16" fill="#a4a4a4" />
<rect x="917" y="245" width="1" height="13" fill="#a4a4a4" />
<rect x="919" y="244" width="1" height="14" fill="#a4a4a4" />
<rect x="921" y="243" width="1" height="15" fill="#a4a4a4" />
<rect x="923" y="243" width="1" height="15" fill="#a4a4a4" />
<rect x="925" y="242" width="1" height="16" fill="#a4a4a4" />
<rect x="927" y="245" width="1" height="13" fill="#a4a4a4" />
<rect x="929" y="242" width="1" height="16" fill="#a4a4a4" />
<rect x="931" y="244" width="1" height="14" fill="#a4a4a4" />
<rect x="933" y="244" width="1" height="14" fill="#a4a4a4" />
<rect x="935" y="245" width="1" height="13" fill="#a4a4a4" />
<rect x="937" y="245" width="1" height="13" fill="#a4a4a4" />
<rect x="939" y="244" width="1" height="14" fill="#a4a4a4" />
<rect x="941" y="244" width="1" height="14" fill="#a4a4a4" />
<rect x="943" y="245" width="1" height="13" fill="#a4a4a4" />
<rect x="914" y="244" width="1" height="14" fill="#6a8ae0" />
<rect x="924" y="244" width="1" height="14" fill="#6a8ae0" />
<rect x="931" y="244" width="1" height="14" fill="#6a8ae0" />
<rect x="358" y="316" width="586" height="6" fill="#fbd8bc" />
<rect x="426" y="347" width="8" height="1" fill="#000" />
<rect x="500" y="349" width="17" height="12" fill="#ececec" />
<rect x="548" y="349" width="6" height="12" fill="#ececec" />
<rect x="598" y="349" width="38" height="12" fill="#ececec" />
<rect x="638" y="349" width="28" height="12" fill="#ececec" />
<rect x="690" y="349" width="8" height="12" fill="#ececec" />
<rect x="724" y="349" width="8" height="12" fill="#ececec" />
<rect x="790" y="349" width="8" height="12" fill="#ececec" />
<rect x="826" y="349" width="7" height="12" fill="#ececec" />
<rect x="875" y="349" width="7" height="12" fill="#ececec" />
<rect x="908" y="349" width="36" height="12" fill="#ececec" />
<rect x="430" y="349" width="42" height="12" fill="#74b8ee" />
<rect x="488" y="349" width="12" height="12" fill="#74b8ee" />
<rect x="536" y="349" width="12" height="12" fill="#74b8ee" />
<rect x="576" y="349" width="22" height="12" fill="#74b8ee" />
<rect x="600" y="349" width="8" height="12" fill="#74b8ee" />
<rect x="678" y="349" width="12" height="12" fill="#74b8ee" />
<rect x="715" y="349" width="9" height="12" fill="#74b8ee" />
<rect x="750" y="349" width="40" height="12" fill="#74b8ee" />
<rect x="812" y="349" width="14" height="12" fill="#74b8ee" />
<rect x="852" y="349" width="23" height="12" fill="#74b8ee" />
<rect x="900" y="349" width="8" height="12" fill="#74b8ee" />
<rect x="428" y="352" width="2" height="9" fill="#74b8ee" />
<rect x="500" y="350" width="10" height="11" fill="#74b8ee" />
<rect x="510" y="355" width="3" height="6" fill="#74b8ee" />
<rect x="513" y="358" width="2" height="3" fill="#74b8ee" />
<rect x="515" y="360" width="2" height="1" fill="#74b8ee" />
<rect x="548" y="357" width="6" height="4" fill="#74b8ee" />
<rect x="714" y="354" width="2" height="7" fill="#74b8ee" />
<rect x="724" y="353" width="2" height="8" fill="#74b8ee" />
<rect x="726" y="358" width="6" height="3" fill="#74b8ee" />
<rect x="690" y="357" width="3" height="4" fill="#74b8ee" />
<rect x="693" y="360" width="5" height="1" fill="#74b8ee" />
<rect x="790" y="353" width="2" height="8" fill="#74b8ee" />
<rect x="792" y="360" width="6" height="1" fill="#74b8ee" />
<rect x="826" y="357" width="3" height="4" fill="#74b8ee" />
<rect x="829" y="360" width="4" height="1" fill="#74b8ee" />
<rect x="875" y="358" width="2" height="3" fill="#74b8ee" />
<rect x="877" y="360" width="5" height="1" fill="#74b8ee" />
<rect x="908" y="355" width="2" height="6" fill="#74b8ee" />
<rect x="608" y="360" width="28" height="1" fill="#74b8ee" />
<rect x="609" y="357" width="1" height="4" fill="#74b8ee" />
<rect x="610" y="358" width="3" height="3" fill="#74b8ee" />
<rect x="617" y="358" width="1" height="3" fill="#74b8ee" />
<rect x="618" y="359" width="3" height="2" fill="#74b8ee" />
<rect x="627" y="358" width="1" height="3" fill="#74b8ee" />
<rect x="628" y="359" width="2" height="2" fill="#74b8ee" />
<rect x="632" y="357" width="1" height="4" fill="#74b8ee" />
<rect x="633" y="358" width="1" height="3" fill="#74b8ee" />
<rect x="638" y="360" width="28" height="1" fill="#74b8ee" />
<rect x="639" y="359" width="1" height="2" fill="#74b8ee" />
<rect x="640" y="359" width="2" height="2" fill="#74b8ee" />
<rect x="648" y="359" width="1" height="2" fill="#74b8ee" />
<rect x="649" y="359" width="2" height="2" fill="#74b8ee" />
<rect x="655" y="359" width="1" height="2" fill="#74b8ee" />
<rect x="656" y="359" width="1" height="2" fill="#74b8ee" />
<rect x="661" y="358" width="1" height="3" fill="#74b8ee" />
<rect x="662" y="359" width="1" height="2" fill="#74b8ee" />
<rect x="910" y="360" width="34" height="1" fill="#74b8ee" />
<rect x="912" y="359" width="1" height="2" fill="#74b8ee" />
<rect x="913" y="359" width="1" height="2" fill="#74b8ee" />
<rect x="918" y="357" width="1" height="4" fill="#74b8ee" />
<rect x="919" y="358" width="3" height="3" fill="#74b8ee" />
<rect x="926" y="358" width="1" height="3" fill="#74b8ee" />
<rect x="927" y="359" width="2" height="2" fill="#74b8ee" />
<rect x="933" y="359" width="1" height="2" fill="#74b8ee" />
<rect x="934" y="359" width="3" height="2" fill="#74b8ee" />
<rect x="940" y="359" width="1" height="2" fill="#74b8ee" />
<rect x="941" y="359" width="3" height="2" fill="#74b8ee" />
<rect x="467" y="362" width="4" height="12" fill="#eeeeee" />
<rect x="475" y="362" width="4" height="12" fill="#eeeeee" />
<rect x="495" y="362" width="4" height="12" fill="#eeeeee" />
<rect x="499" y="362" width="4" height="12" fill="#eeeeee" />
<rect x="507" y="362" width="4" height="12" fill="#eeeeee" />
<rect x="517" y="362" width="4" height="12" fill="#eeeeee" />
<rect x="529" y="362" width="4" height="12" fill="#eeeeee" />
<rect x="545" y="362" width="4" height="12" fill="#eeeeee" />
<rect x="555" y="362" width="4" height="12" fill="#eeeeee" />
<rect x="569" y="362" width="4" height="12" fill="#eeeeee" />
<rect x="583" y="362" width="4" height="12" fill="#eeeeee" />
<rect x="590" y="362" width="4" height="12" fill="#eeeeee" />
<rect x="603" y="362" width="4" height="12" fill="#eeeeee" />
<rect x="665" y="362" width="4" height="12" fill="#eeeeee" />
<rect x="671" y="362" width="4" height="12" fill="#eeeeee" />
<rect x="686" y="362" width="4" height="12" fill="#eeeeee" />
<rect x="695" y="362" width="4" height="12" fill="#eeeeee" />
<rect x="701" y="362" width="4" height="12" fill="#eeeeee" />
<rect x="707" y="362" width="4" height="12" fill="#eeeeee" />
<rect x="721" y="362" width="4" height="12" fill="#eeeeee" />
<rect x="733" y="362" width="4" height="12" fill="#eeeeee" />
<rect x="737" y="362" width="4" height="12" fill="#eeeeee" />
<rect x="743" y="362" width="4" height="12" fill="#eeeeee" />
<rect x="758" y="362" width="4" height="12" fill="#eeeeee" />
<rect x="777" y="362" width="4" height="12" fill="#eeeeee" />
<rect x="789" y="362" width="4" height="12" fill="#eeeeee" />
<rect x="799" y="362" width="4" height="12" fill="#eeeeee" />
<rect x="805" y="362" width="4" height="12" fill="#eeeeee" />
<rect x="817" y="362" width="4" height="12" fill="#eeeeee" />
<rect x="823" y="362" width="4" height="12" fill="#eeeeee" />
<rect x="833" y="362" width="4" height="12" fill="#eeeeee" />
<rect x="837" y="362" width="4" height="12" fill="#eeeeee" />
<rect x="841" y="362" width="4" height="12" fill="#eeeeee" />
<rect x="845" y="362" width="4" height="12" fill="#eeeeee" />
<rect x="853" y="362" width="4" height="12" fill="#eeeeee" />
<rect x="865" y="362" width="4" height="12" fill="#eeeeee" />
<rect x="873" y="362" width="4" height="12" fill="#eeeeee" />
<rect x="881" y="362" width="4" height="12" fill="#eeeeee" />
<rect x="885" y="362" width="4" height="12" fill="#eeeeee" />
<rect x="889" y="362" width="4" height="12" fill="#eeeeee" />
<rect x="893" y="362" width="4" height="12" fill="#eeeeee" />
<rect x="905" y="362" width="4" height="12" fill="#eeeeee" />
<rect x="468" y="362" width="2" height="6" fill="#1cc48e" />
<rect x="476" y="362" width="2" height="4" fill="#dd55ea" />
<rect x="496" y="362" width="2" height="6" fill="#1cc48e" />
<rect x="500" y="362" width="2" height="6" fill="#1cc48e" />
<rect x="508" y="362" width="2" height="5" fill="#1cc48e" />
<rect x="518" y="362" width="2" height="3" fill="#dd55ea" />
<rect x="530" y="362" width="2" height="3" fill="#dd55ea" />
<rect x="546" y="362" width="2" height="6" fill="#1cc48e" />
<rect x="556" y="362" width="2" height="3" fill="#dd55ea" />
<rect x="570" y="362" width="2" height="3" fill="#dd55ea" />
<rect x="584" y="362" width="2" height="1" fill="#1cc48e" />
<rect x="591" y="362" width="2" height="2" fill="#1cc48e" />
<rect x="604" y="362" width="2" height="2" fill="#1cc48e" />
<rect x="666" y="362" width="2" height="6" fill="#dd55ea" />
<rect x="672" y="362" width="2" height="1" fill="#dd55ea" />
<rect x="687" y="362" width="2" height="6" fill="#1cc48e" />
<rect x="696" y="362" width="2" height="1" fill="#dd55ea" />
<rect x="702" y="362" width="2" height="1" fill="#dd55ea" />
<rect x="708" y="362" width="2" height="1" fill="#dd55ea" />
<rect x="722" y="362" width="2" height="5" fill="#1cc48e" />
<rect x="734" y="362" width="2" height="1" fill="#dd55ea" />
<rect x="738" y="362" width="2" height="1" fill="#dd55ea" />
<rect x="744" y="362" width="2" height="1" fill="#dd55ea" />
<rect x="759" y="362" width="2" height="3" fill="#1cc48e" />
<rect x="778" y="362" width="2" height="1" fill="#1cc48e" />
<rect x="790" y="362" width="2" height="1" fill="#1cc48e" />
<rect x="800" y="362" width="2" height="7" fill="#dd55ea" />
<rect x="806" y="362" width="2" height="3" fill="#dd55ea" />
<rect x="818" y="362" width="2" height="8" fill="#1cc48e" />
<rect x="824" y="362" width="2" height="4" fill="#1cc48e" />
<rect x="834" y="362" width="2" height="1" fill="#dd55ea" />
<rect x="838" y="362" width="2" height="1" fill="#dd55ea" />
<rect x="842" y="362" width="2" height="1" fill="#dd55ea" />
<rect x="846" y="362" width="2" height="1" fill="#dd55ea" />
<rect x="854" y="362" width="2" height="2" fill="#1cc48e" />
<rect x="866" y="362" width="2" height="1" fill="#1cc48e" />
<rect x="874" y="362" width="2" height="1" fill="#1cc48e" />
<rect x="882" y="362" width="2" height="1" fill="#dd55ea" />
<rect x="886" y="362" width="2" height="1" fill="#dd55ea" />
<rect x="890" y="362" width="2" height="1" fill="#dd55ea" />
<rect x="894" y="362" width="2" height="1" fill="#dd55ea" />
<rect x="906" y="362" width="2" height="3" fill="#1cc48e" />
<rect x="428.5" y="399.5" width="43" height="19" rx="4" ry="4" fill="url(#gb)" stroke="#3e58a6" stroke-width="1" shape-rendering="geometricPrecision"/>
<rect x="488.5" y="399.5" width="23" height="19" rx="4" ry="4" fill="url(#gb)" stroke="#3e58a6" stroke-width="1" shape-rendering="geometricPrecision"/>
<rect x="534.5" y="399.5" width="15" height="19" rx="4" ry="4" fill="url(#gb)" stroke="#3e58a6" stroke-width="1" shape-rendering="geometricPrecision"/>
<rect x="576.5" y="399.5" width="21" height="19" rx="4" ry="4" fill="url(#gb)" stroke="#3e58a6" stroke-width="1" shape-rendering="geometricPrecision"/>
<rect x="676.5" y="399.5" width="15" height="19" rx="4" ry="4" fill="url(#gb)" stroke="#3e58a6" stroke-width="1" shape-rendering="geometricPrecision"/>
<rect x="750.5" y="399.5" width="41" height="19" rx="4" ry="4" fill="url(#gb)" stroke="#3e58a6" stroke-width="1" shape-rendering="geometricPrecision"/>
<rect x="810.5" y="399.5" width="17" height="19" rx="4" ry="4" fill="url(#gb)" stroke="#3e58a6" stroke-width="1" shape-rendering="geometricPrecision"/>
<rect x="850.5" y="399.5" width="25" height="19" rx="4" ry="4" fill="url(#gb)" stroke="#3e58a6" stroke-width="1" shape-rendering="geometricPrecision"/>
<rect x="488.5" y="422.5" width="23" height="19" rx="4" ry="4" fill="url(#gb)" stroke="#3e58a6" stroke-width="1" shape-rendering="geometricPrecision"/>
<rect x="534.5" y="422.5" width="15" height="19" rx="4" ry="4" fill="url(#gb)" stroke="#3e58a6" stroke-width="1" shape-rendering="geometricPrecision"/>
<rect x="576.5" y="422.5" width="21" height="19" rx="4" ry="4" fill="url(#gb)" stroke="#3e58a6" stroke-width="1" shape-rendering="geometricPrecision"/>
<rect x="676.5" y="422.5" width="15" height="19" rx="4" ry="4" fill="url(#gb)" stroke="#3e58a6" stroke-width="1" shape-rendering="geometricPrecision"/>
<rect x="750.5" y="422.5" width="41" height="19" rx="4" ry="4" fill="url(#gb)" stroke="#3e58a6" stroke-width="1" shape-rendering="geometricPrecision"/>
<rect x="810.5" y="422.5" width="17" height="19" rx="4" ry="4" fill="url(#gb)" stroke="#3e58a6" stroke-width="1" shape-rendering="geometricPrecision"/>
<rect x="850.5" y="422.5" width="25" height="19" rx="4" ry="4" fill="url(#gb)" stroke="#3e58a6" stroke-width="1" shape-rendering="geometricPrecision"/>
<rect x="598.5" y="399.5" width="9" height="19" rx="4" ry="4" fill="url(#gb)" stroke="#3e58a6" stroke-width="1" shape-rendering="geometricPrecision"/>
<rect x="714.5" y="399.5" width="11" height="19" rx="4" ry="4" fill="url(#gb)" stroke="#3e58a6" stroke-width="1" shape-rendering="geometricPrecision"/>
<rect x="714.5" y="422.5" width="11" height="19" rx="4" ry="4" fill="url(#gb)" stroke="#3e58a6" stroke-width="1" shape-rendering="geometricPrecision"/>
<rect x="900.5" y="399.5" width="9" height="19" rx="4" ry="4" fill="url(#gb)" stroke="#3e58a6" stroke-width="1" shape-rendering="geometricPrecision"/>
<rect x="900.5" y="422.5" width="9" height="19" rx="4" ry="4" fill="url(#gb)" stroke="#3e58a6" stroke-width="1" shape-rendering="geometricPrecision"/>
<rect x="512" y="399" width="5" height="20" fill="#ececec" />
<rect x="512" y="417" width="5" height="2" fill="#6a88d8" />
<rect x="550" y="399" width="4" height="20" fill="#ececec" />
<rect x="550" y="417" width="4" height="2" fill="#6a88d8" />
<rect x="692" y="399" width="6" height="20" fill="#ececec" />
<rect x="692" y="417" width="6" height="2" fill="#6a88d8" />
<rect x="726" y="399" width="6" height="20" fill="#ececec" />
<rect x="726" y="417" width="6" height="2" fill="#6a88d8" />
<rect x="792" y="399" width="6" height="20" fill="#ececec" />
<rect x="792" y="417" width="6" height="2" fill="#6a88d8" />
<rect x="828" y="399" width="5" height="20" fill="#ececec" />
<rect x="828" y="417" width="5" height="2" fill="#6a88d8" />
<rect x="876" y="399" width="6" height="20" fill="#ececec" />
<rect x="876" y="417" width="6" height="2" fill="#6a88d8" />
<rect x="608" y="399" width="4" height="20" fill="#ececec" />
<rect x="616" y="399" width="1" height="20" fill="#ececec" />
<rect x="622" y="399" width="14" height="20" fill="#ececec" />
<rect x="638" y="399" width="10" height="20" fill="#ececec" />
<rect x="652" y="399" width="14" height="20" fill="#ececec" />
<rect x="913" y="399" width="7" height="20" fill="#ececec" />
<rect x="922" y="399" width="22" height="20" fill="#ececec" />
<rect x="608" y="418" width="28" height="1" fill="#6a88d8" />
<rect x="609" y="415" width="1" height="4" fill="#6a88d8" />
<rect x="610" y="416" width="3" height="3" fill="#6a88d8" />
<rect x="619" y="415" width="1" height="4" fill="#6a88d8" />
<rect x="620" y="416" width="2" height="3" fill="#6a88d8" />
<rect x="625" y="414" width="1" height="5" fill="#6a88d8" />
<rect x="626" y="415" width="1" height="4" fill="#6a88d8" />
<rect x="630" y="415" width="1" height="4" fill="#6a88d8" />
<rect x="631" y="416" width="2" height="3" fill="#6a88d8" />
<rect x="638" y="418" width="28" height="1" fill="#6a88d8" />
<rect x="641" y="414" width="1" height="5" fill="#6a88d8" />
<rect x="642" y="415" width="2" height="4" fill="#6a88d8" />
<rect x="648" y="414" width="1" height="5" fill="#6a88d8" />
<rect x="649" y="415" width="3" height="4" fill="#6a88d8" />
<rect x="656" y="413" width="1" height="6" fill="#6a88d8" />
<rect x="657" y="414" width="3" height="5" fill="#6a88d8" />
<rect x="664" y="413" width="1" height="6" fill="#6a88d8" />
<rect x="665" y="414" width="1" height="5" fill="#6a88d8" />
<rect x="913" y="418" width="31" height="1" fill="#6a88d8" />
<rect x="916" y="414" width="1" height="5" fill="#6a88d8" />
<rect x="917" y="415" width="2" height="4" fill="#6a88d8" />
<rect x="923" y="413" width="1" height="6" fill="#6a88d8" />
<rect x="924" y="414" width="2" height="5" fill="#6a88d8" />
<rect x="932" y="415" width="1" height="4" fill="#6a88d8" />
<rect x="933" y="416" width="2" height="3" fill="#6a88d8" />
<rect x="939" y="415" width="1" height="4" fill="#6a88d8" />
<rect x="940" y="416" width="2" height="3" fill="#6a88d8" />
<rect x="428.5" y="445.5" width="43" height="19" rx="4" ry="4" fill="url(#gb)" stroke="#3e58a6" stroke-width="1" shape-rendering="geometricPrecision"/>
<rect x="428.5" y="468.5" width="43" height="19" rx="4" ry="4" fill="url(#gb)" stroke="#3e58a6" stroke-width="1" shape-rendering="geometricPrecision"/>
<rect x="797" y="444" width="1" height="22" fill="#f4f8fc" />
<rect x="797" y="465" width="1" height="1" fill="#6a88d8" />
<rect x="797" y="467" width="1" height="22" fill="#ececec" />
<rect x="797" y="487" width="1" height="1" fill="#6a88d8" />
<rect x="796" y="490" width="3" height="24" fill="#ececec" />
<rect x="796" y="512" width="3" height="1" fill="#74b8ee" />
<rect x="833" y="444" width="1" height="22" fill="#f4f8fc" />
<rect x="833" y="465" width="1" height="1" fill="#6a88d8" />
<rect x="833" y="467" width="1" height="22" fill="#ececec" />
<rect x="833" y="487" width="1" height="1" fill="#6a88d8" />
<rect x="832" y="490" width="3" height="24" fill="#ececec" />
<rect x="832" y="512" width="3" height="1" fill="#74b8ee" />
<rect x="881" y="444" width="1" height="22" fill="#f4f8fc" />
<rect x="881" y="465" width="1" height="1" fill="#6a88d8" />
<rect x="881" y="467" width="1" height="22" fill="#ececec" />
<rect x="881" y="487" width="1" height="1" fill="#6a88d8" />
<rect x="880" y="490" width="3" height="24" fill="#ececec" />
<rect x="880" y="512" width="3" height="1" fill="#74b8ee" />
<rect x="910" y="490" width="10" height="24" fill="#ececec" />
<rect x="921" y="490" width="23" height="24" fill="#ececec" />
<rect x="910" y="513" width="10" height="1" fill="#74b8ee" />
<rect x="912" y="507" width="1" height="7" fill="#74b8ee" />
<rect x="913" y="508" width="2" height="6" fill="#74b8ee" />
<rect x="918" y="506" width="1" height="8" fill="#74b8ee" />
<rect x="919" y="507" width="1" height="7" fill="#74b8ee" />
<rect x="921" y="513" width="23" height="1" fill="#74b8ee" />
<rect x="924" y="508" width="1" height="6" fill="#74b8ee" />
<rect x="925" y="509" width="1" height="5" fill="#74b8ee" />
<rect x="930" y="507" width="1" height="7" fill="#74b8ee" />
<rect x="931" y="508" width="2" height="6" fill="#74b8ee" />
<rect x="936" y="508" width="1" height="6" fill="#74b8ee" />
<rect x="937" y="509" width="1" height="5" fill="#74b8ee" />
<rect x="428.5" y="516.5" width="540" height="19" rx="4" ry="4" fill="url(#gn)" stroke="#555" stroke-width="1" shape-rendering="geometricPrecision"/>
<rect x="428" y="537" width="516" height="6" fill="#a9a9a9" />
<rect x="504" y="61" width="1" height="1" fill="#a8a8a8" />
<rect x="504" y="64" width="1" height="1" fill="#a8a8a8" />
<rect x="504" y="67" width="1" height="1" fill="#a8a8a8" />
<rect x="504" y="70" width="1" height="1" fill="#a8a8a8" />
<rect x="504" y="73" width="1" height="1" fill="#a8a8a8" />
<rect x="504" y="76" width="1" height="1" fill="#a8a8a8" />
<rect x="504" y="79" width="1" height="1" fill="#a8a8a8" />
<rect x="504" y="82" width="1" height="1" fill="#a8a8a8" />
<rect x="504" y="85" width="1" height="1" fill="#a8a8a8" />
<rect x="504" y="88" width="1" height="1" fill="#a8a8a8" />
<rect x="504" y="91" width="1" height="1" fill="#a8a8a8" />
<rect x="504" y="94" width="1" height="1" fill="#a8a8a8" />
<rect x="504" y="97" width="1" height="1" fill="#a8a8a8" />
<rect x="504" y="100" width="1" height="1" fill="#a8a8a8" />
<rect x="504" y="103" width="1" height="1" fill="#a8a8a8" />
<rect x="504" y="106" width="1" height="1" fill="#a8a8a8" />
<rect x="504" y="109" width="1" height="1" fill="#a8a8a8" />
<rect x="504" y="112" width="1" height="1" fill="#a8a8a8" />
<rect x="504" y="115" width="1" height="1" fill="#a8a8a8" />
<rect x="504" y="118" width="1" height="1" fill="#a8a8a8" />
<rect x="504" y="121" width="1" height="1" fill="#a8a8a8" />
<rect x="504" y="124" width="1" height="1" fill="#a8a8a8" />
<rect x="504" y="127" width="1" height="1" fill="#a8a8a8" />
<rect x="504" y="130" width="1" height="1" fill="#a8a8a8" />
<rect x="504" y="133" width="1" height="1" fill="#a8a8a8" />
<rect x="504" y="136" width="1" height="1" fill="#a8a8a8" />
<rect x="504" y="139" width="1" height="1" fill="#a8a8a8" />
<rect x="504" y="142" width="1" height="1" fill="#a8a8a8" />
<rect x="504" y="145" width="1" height="1" fill="#a8a8a8" />
<rect x="504" y="148" width="1" height="1" fill="#a8a8a8" />
<rect x="504" y="151" width="1" height="1" fill="#a8a8a8" />
<rect x="504" y="154" width="1" height="1" fill="#a8a8a8" />
<rect x="504" y="157" width="1" height="1" fill="#a8a8a8" />
<rect x="504" y="160" width="1" height="1" fill="#a8a8a8" />
<rect x="504" y="163" width="1" height="1" fill="#a8a8a8" />
<rect x="504" y="166" width="1" height="1" fill="#a8a8a8" />
<rect x="504" y="169" width="1" height="1" fill="#a8a8a8" />
<rect x="504" y="172" width="1" height="1" fill="#a8a8a8" />
<rect x="504" y="175" width="1" height="1" fill="#a8a8a8" />
<rect x="504" y="178" width="1" height="1" fill="#a8a8a8" />
<rect x="504" y="181" width="1" height="1" fill="#a8a8a8" />
<rect x="504" y="184" width="1" height="1" fill="#a8a8a8" />
<rect x="504" y="187" width="1" height="1" fill="#a8a8a8" />
<rect x="504" y="190" width="1" height="1" fill="#a8a8a8" />
<rect x="504" y="193" width="1" height="1" fill="#a8a8a8" />
<rect x="504" y="196" width="1" height="1" fill="#a8a8a8" />
<rect x="504" y="199" width="1" height="1" fill="#a8a8a8" />
<rect x="504" y="202" width="1" height="1" fill="#a8a8a8" />
<rect x="504" y="205" width="1" height="1" fill="#a8a8a8" />
<rect x="504" y="208" width="1" height="1" fill="#a8a8a8" />
<rect x="504" y="211" width="1" height="1" fill="#a8a8a8" />
<rect x="504" y="214" width="1" height="1" fill="#a8a8a8" />
<rect x="504" y="217" width="1" height="1" fill="#a8a8a8" />
<rect x="504" y="220" width="1" height="1" fill="#a8a8a8" />
<rect x="504" y="223" width="1" height="1" fill="#a8a8a8" />
<rect x="504" y="226" width="1" height="1" fill="#a8a8a8" />
<rect x="504" y="229" width="1" height="1" fill="#a8a8a8" />
<rect x="504" y="232" width="1" height="1" fill="#a8a8a8" />
<rect x="504" y="235" width="1" height="1" fill="#a8a8a8" />
<rect x="504" y="238" width="1" height="1" fill="#a8a8a8" />
<rect x="504" y="241" width="1" height="1" fill="#a8a8a8" />
<rect x="504" y="244" width="1" height="1" fill="#a8a8a8" />
<rect x="504" y="247" width="1" height="1" fill="#a8a8a8" />
<rect x="504" y="250" width="1" height="1" fill="#a8a8a8" />
<rect x="504" y="253" width="1" height="1" fill="#a8a8a8" />
<rect x="504" y="256" width="1" height="1" fill="#a8a8a8" />
<rect x="504" y="259" width="1" height="1" fill="#a8a8a8" />
<rect x="504" y="262" width="1" height="1" fill="#a8a8a8" />
<rect x="504" y="265" width="1" height="1" fill="#a8a8a8" />
<rect x="504" y="268" width="1" height="1" fill="#a8a8a8" />
<rect x="504" y="271" width="1" height="1" fill="#a8a8a8" />
<rect x="504" y="274" width="1" height="1" fill="#a8a8a8" />
<rect x="504" y="277" width="1" height="1" fill="#a8a8a8" />
<rect x="504" y="280" width="1" height="1" fill="#a8a8a8" />
<rect x="504" y="283" width="1" height="1" fill="#a8a8a8" />
<rect x="504" y="286" width="1" height="1" fill="#a8a8a8" />
<rect x="504" y="289" width="1" height="1" fill="#a8a8a8" />
<rect x="504" y="292" width="1" height="1" fill="#a8a8a8" />
<rect x="504" y="295" width="1" height="1" fill="#a8a8a8" />
<rect x="504" y="298" width="1" height="1" fill="#a8a8a8" />
<rect x="504" y="301" width="1" height="1" fill="#a8a8a8" />
<rect x="504" y="304" width="1" height="1" fill="#a8a8a8" />
<rect x="504" y="307" width="1" height="1" fill="#a8a8a8" />
<rect x="504" y="310" width="1" height="1" fill="#a8a8a8" />
<rect x="504" y="313" width="1" height="1" fill="#a8a8a8" />
<rect x="504" y="316" width="1" height="1" fill="#a8a8a8" />
<rect x="504" y="319" width="1" height="1" fill="#a8a8a8" />
<rect x="504" y="322" width="1" height="1" fill="#a8a8a8" />
<rect x="504" y="325" width="1" height="1" fill="#a8a8a8" />
<rect x="504" y="328" width="1" height="1" fill="#a8a8a8" />
<rect x="504" y="331" width="1" height="1" fill="#a8a8a8" />
<rect x="504" y="334" width="1" height="1" fill="#a8a8a8" />
<rect x="504" y="337" width="1" height="1" fill="#a8a8a8" />
<rect x="504" y="340" width="1" height="1" fill="#a8a8a8" />
<rect x="504" y="343" width="1" height="1" fill="#a8a8a8" />
<rect x="504" y="346" width="1" height="1" fill="#a8a8a8" />
<rect x="504" y="349" width="1" height="1" fill="#a8a8a8" />
<rect x="504" y="352" width="1" height="1" fill="#a8a8a8" />
<rect x="504" y="355" width="1" height="1" fill="#a8a8a8" />
<rect x="504" y="358" width="1" height="1" fill="#a8a8a8" />
<rect x="504" y="361" width="1" height="1" fill="#a8a8a8" />
<rect x="504" y="364" width="1" height="1" fill="#a8a8a8" />
<rect x="504" y="367" width="1" height="1" fill="#a8a8a8" />
<rect x="504" y="370" width="1" height="1" fill="#a8a8a8" />
<rect x="504" y="373" width="1" height="1" fill="#a8a8a8" />
<rect x="504" y="376" width="1" height="1" fill="#a8a8a8" />
<rect x="504" y="379" width="1" height="1" fill="#a8a8a8" />
<rect x="504" y="382" width="1" height="1" fill="#a8a8a8" />
<rect x="504" y="385" width="1" height="1" fill="#a8a8a8" />
<rect x="504" y="388" width="1" height="1" fill="#a8a8a8" />
<rect x="504" y="391" width="1" height="1" fill="#a8a8a8" />
<rect x="504" y="394" width="1" height="1" fill="#a8a8a8" />
<rect x="504" y="397" width="1" height="1" fill="#a8a8a8" />
<rect x="504" y="400" width="1" height="1" fill="#a8a8a8" />
<rect x="504" y="403" width="1" height="1" fill="#a8a8a8" />
<rect x="504" y="406" width="1" height="1" fill="#a8a8a8" />
<rect x="504" y="409" width="1" height="1" fill="#a8a8a8" />
<rect x="504" y="412" width="1" height="1" fill="#a8a8a8" />
<rect x="504" y="415" width="1" height="1" fill="#a8a8a8" />
<rect x="504" y="418" width="1" height="1" fill="#a8a8a8" />
<rect x="504" y="421" width="1" height="1" fill="#a8a8a8" />
<rect x="504" y="424" width="1" height="1" fill="#a8a8a8" />
<rect x="504" y="427" width="1" height="1" fill="#a8a8a8" />
<rect x="504" y="430" width="1" height="1" fill="#a8a8a8" />
<rect x="504" y="433" width="1" height="1" fill="#a8a8a8" />
<rect x="504" y="436" width="1" height="1" fill="#a8a8a8" />
<rect x="504" y="439" width="1" height="1" fill="#a8a8a8" />
<rect x="504" y="442" width="1" height="1" fill="#a8a8a8" />
<rect x="504" y="445" width="1" height="1" fill="#a8a8a8" />
<rect x="504" y="448" width="1" height="1" fill="#a8a8a8" />
<rect x="504" y="451" width="1" height="1" fill="#a8a8a8" />
<rect x="504" y="454" width="1" height="1" fill="#a8a8a8" />
<rect x="504" y="457" width="1" height="1" fill="#a8a8a8" />
<rect x="504" y="460" width="1" height="1" fill="#a8a8a8" />
<rect x="504" y="463" width="1" height="1" fill="#a8a8a8" />
<rect x="504" y="466" width="1" height="1" fill="#a8a8a8" />
<rect x="504" y="469" width="1" height="1" fill="#a8a8a8" />
<rect x="504" y="472" width="1" height="1" fill="#a8a8a8" />
<rect x="504" y="475" width="1" height="1" fill="#a8a8a8" />
<rect x="504" y="478" width="1" height="1" fill="#a8a8a8" />
<rect x="504" y="481" width="1" height="1" fill="#a8a8a8" />
<rect x="504" y="484" width="1" height="1" fill="#a8a8a8" />
<rect x="504" y="487" width="1" height="1" fill="#a8a8a8" />
<rect x="504" y="490" width="1" height="1" fill="#a8a8a8" />
<rect x="504" y="493" width="1" height="1" fill="#a8a8a8" />
<rect x="504" y="496" width="1" height="1" fill="#a8a8a8" />
<rect x="504" y="499" width="1" height="1" fill="#a8a8a8" />
<rect x="504" y="502" width="1" height="1" fill="#a8a8a8" />
<rect x="504" y="505" width="1" height="1" fill="#a8a8a8" />
<rect x="504" y="508" width="1" height="1" fill="#a8a8a8" />
<rect x="504" y="511" width="1" height="1" fill="#a8a8a8" />
<rect x="504" y="514" width="1" height="1" fill="#a8a8a8" />
<rect x="504" y="517" width="1" height="1" fill="#a8a8a8" />
<rect x="504" y="520" width="1" height="1" fill="#a8a8a8" />
<rect x="504" y="523" width="1" height="1" fill="#a8a8a8" />
<rect x="504" y="526" width="1" height="1" fill="#a8a8a8" />
<rect x="504" y="529" width="1" height="1" fill="#a8a8a8" />
<rect x="504" y="532" width="1" height="1" fill="#a8a8a8" />
<rect x="504" y="535" width="1" height="1" fill="#a8a8a8" />
<rect x="504" y="538" width="1" height="1" fill="#a8a8a8" />
<rect x="504" y="541" width="1" height="1" fill="#a8a8a8" />
<rect x="504" y="544" width="1" height="1" fill="#a8a8a8" />
<rect x="504" y="547" width="1" height="1" fill="#a8a8a8" />
<rect x="504" y="550" width="1" height="1" fill="#a8a8a8" />
<rect x="504" y="553" width="1" height="1" fill="#a8a8a8" />
<rect x="504" y="556" width="1" height="1" fill="#a8a8a8" />
<rect x="504" y="559" width="1" height="1" fill="#a8a8a8" />
<rect x="504" y="562" width="1" height="1" fill="#a8a8a8" />
<rect x="504" y="565" width="1" height="1" fill="#a8a8a8" />
<rect x="504" y="568" width="1" height="1" fill="#a8a8a8" />
<rect x="504" y="571" width="1" height="1" fill="#a8a8a8" />
<rect x="504" y="574" width="1" height="1" fill="#a8a8a8" />
<rect x="504" y="577" width="1" height="1" fill="#a8a8a8" />
<rect x="504" y="580" width="1" height="1" fill="#a8a8a8" />
<rect x="504" y="583" width="1" height="1" fill="#a8a8a8" />
<rect x="504" y="586" width="1" height="1" fill="#a8a8a8" />
<rect x="504" y="589" width="1" height="1" fill="#a8a8a8" />
<rect x="504" y="592" width="1" height="1" fill="#a8a8a8" />
<rect x="504" y="595" width="1" height="1" fill="#a8a8a8" />
<rect x="504" y="598" width="1" height="1" fill="#a8a8a8" />
<rect x="504" y="601" width="1" height="1" fill="#a8a8a8" />
<rect x="504" y="604" width="1" height="1" fill="#a8a8a8" />
<rect x="504" y="607" width="1" height="1" fill="#a8a8a8" />
<rect x="504" y="610" width="1" height="1" fill="#a8a8a8" />
<rect x="504" y="613" width="1" height="1" fill="#a8a8a8" />
<rect x="504" y="616" width="1" height="1" fill="#a8a8a8" />
<rect x="504" y="619" width="1" height="1" fill="#a8a8a8" />
<rect x="504" y="622" width="1" height="1" fill="#a8a8a8" />
<rect x="504" y="625" width="1" height="1" fill="#a8a8a8" />
<rect x="504" y="628" width="1" height="1" fill="#a8a8a8" />
<rect x="504" y="631" width="1" height="1" fill="#a8a8a8" />
<rect x="504" y="634" width="1" height="1" fill="#a8a8a8" />
<rect x="504" y="637" width="1" height="1" fill="#a8a8a8" />
<rect x="504" y="640" width="1" height="1" fill="#a8a8a8" />
<rect x="504" y="643" width="1" height="1" fill="#a8a8a8" />
<rect x="504" y="646" width="1" height="1" fill="#a8a8a8" />
<rect x="504" y="649" width="1" height="1" fill="#a8a8a8" />
<rect x="504" y="652" width="1" height="1" fill="#a8a8a8" />
<rect x="504" y="655" width="1" height="1" fill="#a8a8a8" />
<rect x="504" y="658" width="1" height="1" fill="#a8a8a8" />
<rect x="504" y="661" width="1" height="1" fill="#a8a8a8" />
<rect x="504" y="664" width="1" height="1" fill="#a8a8a8" />
<rect x="504" y="667" width="1" height="1" fill="#a8a8a8" />
</svg>
<div class="t" style="left:431.19px;top:168.52px;font-size:11.44px;color:#303030;font-weight:normal;letter-spacing:0.323px;-webkit-text-stroke:0.1px currentColor;">Com...</div>
<div class="t" style="left:488.91px;top:168.52px;font-size:11.44px;color:#303030;font-weight:normal;letter-spacing:0.094px;-webkit-text-stroke:0.1px currentColor;">C...</div>
<div class="t" style="left:581.25px;top:168.52px;font-size:11.44px;color:#303030;font-weight:normal;letter-spacing:0.318px;-webkit-text-stroke:0.1px currentColor;">...</div>
<div class="t" style="left:757.64px;top:168.52px;font-size:11.44px;color:#303030;font-weight:normal;letter-spacing:0.113px;-webkit-text-stroke:0.1px currentColor;">Co...</div>
<div class="t" style="left:812.75px;top:168.52px;font-size:11.44px;color:#303030;font-weight:normal;letter-spacing:0.318px;-webkit-text-stroke:0.1px currentColor;">...</div>
<div class="t" style="left:853.41px;top:168.52px;font-size:11.44px;color:#303030;font-weight:normal;letter-spacing:0.094px;-webkit-text-stroke:0.1px currentColor;">C...</div>
<div class="t" style="left:430.86px;top:189.02px;font-size:11.44px;color:#303030;font-weight:normal;letter-spacing:0.336px;-webkit-text-stroke:0.1px currentColor;">Wait ...</div>
<div class="t" style="left:493.75px;top:189.02px;font-size:11.44px;color:#303030;font-weight:normal;letter-spacing:0.318px;-webkit-text-stroke:0.1px currentColor;">...</div>
<div class="t" style="left:581.75px;top:189.02px;font-size:11.44px;color:#303030;font-weight:normal;letter-spacing:0.318px;-webkit-text-stroke:0.1px currentColor;">...</div>
<div class="t" style="left:753.61px;top:189.02px;font-size:11.44px;color:#303030;font-weight:normal;letter-spacing:0.337px;-webkit-text-stroke:0.1px currentColor;">Wait...</div>
<div class="t" style="left:852.95px;top:189.02px;font-size:11.44px;color:#303030;font-weight:normal;letter-spacing:-0.059px;-webkit-text-stroke:0.1px currentColor;">W...</div>
<div class="t" style="left:831.08px;top:213.02px;font-size:11.44px;color:#383838;font-weight:normal;letter-spacing:0.647px;-webkit-text-stroke:0.1px currentColor;">init [270.471 ms]</div>
<div class="t" style="left:433.59px;top:242.52px;font-size:11.44px;color:#303030;font-weight:normal;letter-spacing:0.342px;-webkit-text-stroke:0.1px currentColor;">cuSt...</div>
<div class="t" style="left:491.73px;top:242.52px;font-size:11.44px;color:#303030;font-weight:normal;letter-spacing:0.320px;-webkit-text-stroke:0.1px currentColor;">c...</div>
<div class="t" style="left:578.73px;top:242.52px;font-size:11.44px;color:#303030;font-weight:normal;letter-spacing:0.320px;-webkit-text-stroke:0.1px currentColor;">c...</div>
<div class="t" style="left:753.59px;top:242.52px;font-size:11.44px;color:#303030;font-weight:normal;letter-spacing:0.342px;-webkit-text-stroke:0.1px currentColor;">cuSt...</div>
<div class="t" style="left:854.73px;top:242.52px;font-size:11.44px;color:#303030;font-weight:normal;letter-spacing:0.320px;-webkit-text-stroke:0.1px currentColor;">c...</div>
<div class="t" style="left:433.59px;top:403.02px;font-size:11.44px;color:#303030;font-weight:normal;letter-spacing:0.237px;-webkit-text-stroke:0.1px currentColor;">set_...</div>
<div class="t" style="left:491.73px;top:403.02px;font-size:11.44px;color:#303030;font-weight:normal;letter-spacing:0.320px;-webkit-text-stroke:0.1px currentColor;">c...</div>
<div class="t" style="left:536.75px;top:403.02px;font-size:11.44px;color:#303030;font-weight:normal;letter-spacing:0.318px;-webkit-text-stroke:0.1px currentColor;">...</div>
<div class="t" style="left:578.73px;top:403.02px;font-size:11.44px;color:#303030;font-weight:normal;letter-spacing:0.320px;-webkit-text-stroke:0.1px currentColor;">c...</div>
<div class="t" style="left:678.75px;top:403.02px;font-size:11.44px;color:#303030;font-weight:normal;letter-spacing:0.318px;-webkit-text-stroke:0.1px currentColor;">...</div>
<div class="t" style="left:754.01px;top:403.02px;font-size:11.44px;color:#303030;font-weight:normal;letter-spacing:0.474px;-webkit-text-stroke:0.1px currentColor;">com...</div>
<div class="t" style="left:813.75px;top:403.02px;font-size:11.44px;color:#303030;font-weight:normal;letter-spacing:0.318px;-webkit-text-stroke:0.1px currentColor;">...</div>
<div class="t" style="left:854.73px;top:403.02px;font-size:11.44px;color:#303030;font-weight:normal;letter-spacing:0.320px;-webkit-text-stroke:0.1px currentColor;">c...</div>
<div class="t" style="left:493.48px;top:426.02px;font-size:11.44px;color:#303030;font-weight:normal;letter-spacing:0.323px;-webkit-text-stroke:0.1px currentColor;">c..</div>
<div class="t" style="left:536.75px;top:426.02px;font-size:11.44px;color:#303030;font-weight:normal;letter-spacing:0.318px;-webkit-text-stroke:0.1px currentColor;">...</div>
<div class="t" style="left:578.73px;top:426.02px;font-size:11.44px;color:#303030;font-weight:normal;letter-spacing:0.320px;-webkit-text-stroke:0.1px currentColor;">c...</div>
<div class="t" style="left:678.75px;top:426.02px;font-size:11.44px;color:#303030;font-weight:normal;letter-spacing:0.318px;-webkit-text-stroke:0.1px currentColor;">...</div>
<div class="t" style="left:754.01px;top:426.02px;font-size:11.44px;color:#303030;font-weight:normal;letter-spacing:0.474px;-webkit-text-stroke:0.1px currentColor;">com...</div>
<div class="t" style="left:813.75px;top:426.02px;font-size:11.44px;color:#303030;font-weight:normal;letter-spacing:0.318px;-webkit-text-stroke:0.1px currentColor;">...</div>
<div class="t" style="left:854.73px;top:426.02px;font-size:11.44px;color:#303030;font-weight:normal;letter-spacing:0.320px;-webkit-text-stroke:0.1px currentColor;">c...</div>
<div class="t" style="left:433.59px;top:449.02px;font-size:11.44px;color:#303030;font-weight:normal;letter-spacing:0.237px;-webkit-text-stroke:0.1px currentColor;">set_...</div>
<div class="t" style="left:433.59px;top:472.02px;font-size:11.44px;color:#303030;font-weight:normal;letter-spacing:0.237px;-webkit-text-stroke:0.1px currentColor;">set_...</div>
<div class="t" style="left:864.00px;top:520.52px;font-size:11.44px;color:#383838;font-weight:normal;letter-spacing:0.609px;-webkit-text-stroke:0.1px currentColor;">while [15.018 ms]</div>
<div class="r" style="left:473px;top:40px;width:64px;height:18px;background:rgba(58,58,58,0.93);border-radius:4px;"></div>
<div class="t" style="left:477.53px;top:43.52px;font-size:11.44px;color:#ffffff;font-weight:normal;letter-spacing:0.588px;">272.69ms</div>
<div class="r" style="left:506px;top:445px;width:247px;height:261px;background:#ffffdc;border:1px solid #000;box-shadow:2px 3px 9px rgba(0,0,0,0.35);"></div>
<div class="r" style="left:509px;top:501px;width:138px;height:21px;background:#c4f4b0;"></div>
<div class="t" style="left:510.50px;top:449.70px;font-size:12.48px;color:#000;font-weight:bold;letter-spacing:0.720px;">compute_tendencies_x_277_gpu</div>
<div class="t" style="left:510.50px;top:464.70px;font-size:12.48px;color:#000;font-weight:normal;letter-spacing:0.500px;">Begins: 0.272448s</div>
<div class="t" style="left:510.50px;top:479.70px;font-size:12.48px;color:#000;font-weight:normal;letter-spacing:0.565px;">Ends: 0.272797s (+348.543 μs)</div>
<div class="t" style="left:510.50px;top:494.70px;font-size:12.48px;color:#000;font-weight:normal;letter-spacing:1.206px;">grid:  &lt;&lt;&lt;7, 1, 1&gt;&gt;&gt;</div>
<div class="t" style="left:510.50px;top:509.70px;font-size:12.48px;color:#000;font-weight:normal;letter-spacing:1.146px;">block: &lt;&lt;&lt;128, 1, 1&gt;&gt;&gt;</div>
<div class="t" style="left:510.50px;top:524.70px;font-size:12.48px;color:#000;font-weight:normal;letter-spacing:0.302px;">Launch Type: Regular</div>
<div class="t" style="left:510.50px;top:539.70px;font-size:12.48px;color:#000;font-weight:normal;letter-spacing:0.483px;">Static Shared Memory: 0 bytes</div>
<div class="t" style="left:510.50px;top:554.70px;font-size:12.48px;color:#000;font-weight:normal;letter-spacing:0.510px;">Dynamic Shared Memory: 0 bytes</div>
<div class="t" style="left:510.50px;top:569.70px;font-size:12.48px;color:#000;font-weight:normal;letter-spacing:0.341px;">Registers Per Thread: 72</div>
<div class="t" style="left:510.50px;top:584.70px;font-size:12.48px;color:#000;font-weight:normal;letter-spacing:0.422px;">Local Memory Per Thread: 0 bytes</div>
<div class="t" style="left:510.50px;top:599.70px;font-size:12.48px;color:#000;font-weight:normal;letter-spacing:0.476px;">Local Memory Total: 191,365,120 bytes</div>
<div class="t" style="left:510.50px;top:614.70px;font-size:12.48px;color:#000;font-weight:normal;letter-spacing:0.527px;">Shared Memory executed: 0 bytes</div>
<div class="t" style="left:510.50px;top:629.70px;font-size:12.48px;color:#000;font-weight:normal;letter-spacing:0.388px;">Shared Memory Bank Size: 4 B</div>
<div class="t" style="left:510.50px;top:644.70px;font-size:12.48px;color:#000;font-weight:normal;letter-spacing:0.480px;">Theoretical occupancy: 43.75 %</div>
<div class="t" style="left:510.50px;top:659.70px;font-size:12.48px;color:#000;font-weight:normal;letter-spacing:0.584px;">Launched from thread: 27773</div>
<div class="t" style="left:510.50px;top:674.70px;font-size:12.48px;color:#000;font-weight:normal;letter-spacing:0.320px;">Latency: ←27.191 μs</div>
<div class="t" style="left:510.50px;top:689.70px;font-size:12.48px;color:#000;font-weight:normal;letter-spacing:0.454px;">Correlation ID: 36</div>
<svg class="r" style="left:500px;top:425px" width="20" height="24" viewBox="0 0 20 24"><path d="M3.5 2.5 L3.5 19.5 L7.5 15.8 L10 21.3 L12.6 20.2 L10.2 14.8 L15.2 14.8 Z" fill="#fff" stroke="#000" stroke-width="1.3" stroke-linejoin="miter"/></svg>
</body></html>
